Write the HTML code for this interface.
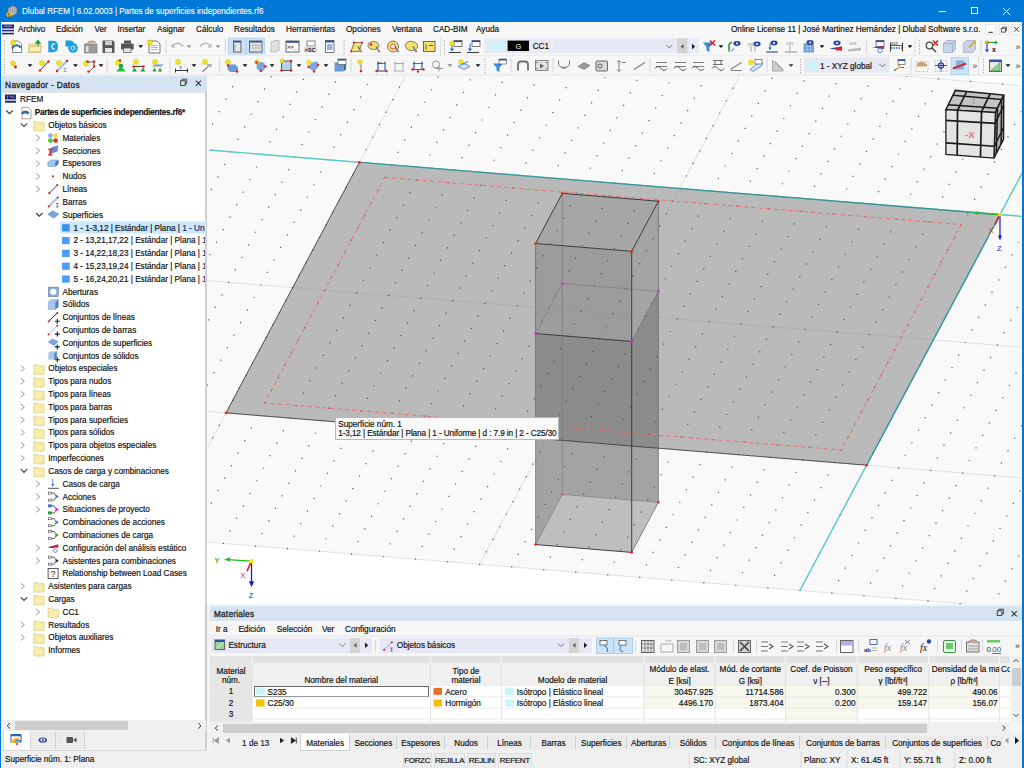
<!DOCTYPE html><html><head><meta charset="utf-8"><style>
*{margin:0;padding:0;box-sizing:border-box}
html,body{width:1024px;height:768px;overflow:hidden;background:#f0f0f0;font-family:"Liberation Sans",sans-serif;font-size:8.2px;color:#1e1e1e}
.a{position:absolute}
.t{position:absolute;white-space:nowrap;line-height:10px}
.tr{color:#111;-webkit-text-stroke:0.18px #111}
</style></head><body>
<div class="a" style="left:0;top:0;width:1024px;height:22px;background:#0078d7"></div>
<div class="t" style="left:21.6px;top:6px;color:#fff;font-size:9.2px;transform:scaleX(0.88);transform-origin:0 0;-webkit-text-stroke:0.1px #fff">Dlubal RFEM | 6.02.0003 | Partes de superficies independientes.rf6</div>
<svg class="a" style="left:4px;top:4px" width="16" height="14" viewBox="4 4 16 14"><path d="M8 8l5 -2.5l4 2v6l-5 2.5l-4 -2z" fill="#b8bcc8" stroke="#555a66" stroke-width="0.7"/><path d="M10 7v7M12.5 6v7.5M15 6.5v7" stroke="#7a8090" stroke-width="0.6"/><circle cx="9" cy="14.5" r="2.6" fill="#f0c010"/><text x="7.6" y="16.5" font-family="Liberation Sans" font-size="4.5" fill="#333">6</text></svg>
<div class="a" style="left:939px;top:10.5px;width:7px;height:1px;background:#fff"></div>
<div class="a" style="left:970.5px;top:7.3px;width:7.2px;height:7px;border:1px solid #fff"></div>
<svg class="a" style="left:1002px;top:6.5px" width="9" height="9" viewBox="0 0 9 9"><path d="M0.8 0.8L8.2 8.2M8.2 0.8L0.8 8.2" stroke="#fff" stroke-width="1"/></svg>
<div class="a" style="left:0;top:0;width:1px;height:768px;background:#0078d7"></div>
<div class="a" style="left:1022px;top:0;width:2px;height:768px;background:#0078d7"></div>
<div class="a" style="left:1px;top:22px;width:1021px;height:15px;background:#f7f7f7"></div>
<div class="t tr" style="left:18px;top:25px">Archivo</div>
<div class="t tr" style="left:56px;top:25px">Edición</div>
<div class="t tr" style="left:94.5px;top:25px">Ver</div>
<div class="t tr" style="left:117.5px;top:25px">Insertar</div>
<div class="t tr" style="left:157px;top:25px">Asignar</div>
<div class="t tr" style="left:196px;top:25px">Cálculo</div>
<div class="t tr" style="left:234px;top:25px">Resultados</div>
<div class="t tr" style="left:286px;top:25px">Herramientas</div>
<div class="t tr" style="left:346px;top:25px">Opciones</div>
<div class="t tr" style="left:392px;top:25px">Ventana</div>
<div class="t tr" style="left:433px;top:25px">CAD-BIM</div>
<div class="t tr" style="left:476px;top:25px">Ayuda</div>
<div class="t tr" style="left:731px;top:25px">Online License 11 | José Martinez Hernández | Dlubal Software s.r.o.</div>
<svg class="a" style="left:1px;top:22px" width="16" height="15" viewBox="1 22 16 15"><rect x="2" y="24.5" width="12" height="4" fill="#1e2a78"/><rect x="2" y="29.8" width="12" height="1.6" fill="#1e2a78"/><rect x="2" y="32.8" width="12" height="1.6" fill="#1e2a78"/><path d="M4 26.2h8" stroke="#d0d8f8" stroke-width="0.7"/></svg>
<div class="a" style="left:985.4px;top:23.6px;width:10.5px;height:11.5px;background:#fff;border:1px solid #e8e8e8"></div>
<div class="a" style="left:998.7px;top:23.6px;width:10.5px;height:11.5px;background:#fff;border:1px solid #e8e8e8"></div>
<div class="a" style="left:1011px;top:23.6px;width:10.5px;height:11.5px;background:#fff;border:1px solid #e8e8e8"></div>
<svg class="a" style="left:984px;top:22px" width="38" height="15" viewBox="984 22 38 15"><path d="M988.3 32.3h4.5" stroke="#333" stroke-width="1"/><rect x="1001.3" y="28.3" width="4" height="3.8" fill="none" stroke="#333" stroke-width="0.8"/><path d="M1002.6 28.3v-1.3h4v3.8h-1.3" fill="none" stroke="#333" stroke-width="0.8"/><path d="M1014 26.8l5 5M1019 26.8l-5 5" stroke="#333" stroke-width="1"/></svg>
<svg class="a" style="left:0;top:37px" width="1024" height="38" viewBox="0 37 1024 38"><rect x="1" y="37" width="1021" height="38" fill="#f7f7f7"/><path d="M1 55.6h1021" stroke="#e8e8e8" stroke-width="0.8"/><path d="M1 74.6h1021" stroke="#e4e4e4" stroke-width="0.8"/><rect x="4" y="40.0" width="1" height="1" fill="#a0a0a0"/><rect x="4" y="42.6" width="1" height="1" fill="#a0a0a0"/><rect x="4" y="45.2" width="1" height="1" fill="#a0a0a0"/><rect x="4" y="47.8" width="1" height="1" fill="#a0a0a0"/><rect x="4" y="50.4" width="1" height="1" fill="#a0a0a0"/><rect x="4" y="53.0" width="1" height="1" fill="#a0a0a0"/><rect x="4" y="59.0" width="1" height="1" fill="#a0a0a0"/><rect x="4" y="61.6" width="1" height="1" fill="#a0a0a0"/><rect x="4" y="64.2" width="1" height="1" fill="#a0a0a0"/><rect x="4" y="66.8" width="1" height="1" fill="#a0a0a0"/><rect x="4" y="69.4" width="1" height="1" fill="#a0a0a0"/><rect x="4" y="72.0" width="1" height="1" fill="#a0a0a0"/><rect x="343.6" y="40.0" width="1" height="1" fill="#a0a0a0"/><rect x="343.6" y="42.6" width="1" height="1" fill="#a0a0a0"/><rect x="343.6" y="45.2" width="1" height="1" fill="#a0a0a0"/><rect x="343.6" y="47.8" width="1" height="1" fill="#a0a0a0"/><rect x="343.6" y="50.4" width="1" height="1" fill="#a0a0a0"/><rect x="343.6" y="53.0" width="1" height="1" fill="#a0a0a0"/><rect x="444" y="40.0" width="1" height="1" fill="#a0a0a0"/><rect x="444" y="42.6" width="1" height="1" fill="#a0a0a0"/><rect x="444" y="45.2" width="1" height="1" fill="#a0a0a0"/><rect x="444" y="47.8" width="1" height="1" fill="#a0a0a0"/><rect x="444" y="50.4" width="1" height="1" fill="#a0a0a0"/><rect x="444" y="53.0" width="1" height="1" fill="#a0a0a0"/><rect x="484.5" y="59.0" width="1" height="1" fill="#a0a0a0"/><rect x="484.5" y="61.6" width="1" height="1" fill="#a0a0a0"/><rect x="484.5" y="64.2" width="1" height="1" fill="#a0a0a0"/><rect x="484.5" y="66.8" width="1" height="1" fill="#a0a0a0"/><rect x="484.5" y="69.4" width="1" height="1" fill="#a0a0a0"/><rect x="484.5" y="72.0" width="1" height="1" fill="#a0a0a0"/><rect x="800" y="59.0" width="1" height="1" fill="#a0a0a0"/><rect x="800" y="61.6" width="1" height="1" fill="#a0a0a0"/><rect x="800" y="64.2" width="1" height="1" fill="#a0a0a0"/><rect x="800" y="66.8" width="1" height="1" fill="#a0a0a0"/><rect x="800" y="69.4" width="1" height="1" fill="#a0a0a0"/><rect x="800" y="72.0" width="1" height="1" fill="#a0a0a0"/><rect x="919" y="40.0" width="1" height="1" fill="#a0a0a0"/><rect x="919" y="42.6" width="1" height="1" fill="#a0a0a0"/><rect x="919" y="45.2" width="1" height="1" fill="#a0a0a0"/><rect x="919" y="47.8" width="1" height="1" fill="#a0a0a0"/><rect x="919" y="50.4" width="1" height="1" fill="#a0a0a0"/><rect x="919" y="53.0" width="1" height="1" fill="#a0a0a0"/><rect x="983" y="59.0" width="1" height="1" fill="#a0a0a0"/><rect x="983" y="61.6" width="1" height="1" fill="#a0a0a0"/><rect x="983" y="64.2" width="1" height="1" fill="#a0a0a0"/><rect x="983" y="66.8" width="1" height="1" fill="#a0a0a0"/><rect x="983" y="69.4" width="1" height="1" fill="#a0a0a0"/><rect x="983" y="72.0" width="1" height="1" fill="#a0a0a0"/><path d="M440.6 37V56" stroke="#e0e0e0" stroke-width="1"/><path d="M915.0 37V56" stroke="#e0e0e0" stroke-width="1"/><path d="M978.5 56V75" stroke="#e0e0e0" stroke-width="1"/><path d="M338.0 56V75" stroke="#f5f5f5" stroke-width="1"/><path d="M12.5 41.0h6l3 3v8.5h-9z" fill="#fff" stroke="#666" stroke-width="0.8"/><path d="M12 48.5q4 -6 9 -1" fill="none" stroke="#3a6ab0" stroke-width="2.2"/><polygon points="13.00,39.50 13.57,41.11 15.12,40.38 14.39,41.93 16.00,42.50 14.39,43.07 15.12,44.62 13.57,43.89 13.00,45.50 12.43,43.89 10.88,44.62 11.61,43.07 10.00,42.50 11.61,41.93 10.88,40.38 12.43,41.11" fill="#f8f000" stroke="#c8b400" stroke-width="0.4"/><path d="M28.8 44.0h4l1 1h7v7.5h-12z" fill="#f2e6a0" stroke="#c8b46a" stroke-width="0.7"/><path d="M28.3 52.0l2 -5.5h11.2l-1.8 5.5z" fill="#f8eeb4" stroke="#c8b46a" stroke-width="0.6"/><path d="M38 45.5v-4M36 43.0l2 -2.5l2 2.5z" stroke="#20a020" fill="#20a020" stroke-width="1.3"/><path d="M48.3 40.7h4.5q5.2 0 5.2 5.8t-5.2 5.8h-4.5z" fill="#1aa0e0"/><path d="M55 44.0q-3 -0.5 -3 2.5t3 2.5" fill="none" stroke="#fff" stroke-width="1.2"/><path d="M65.5 40.5h4.5q4 0 4 4v2h-8.5z" fill="#1aa0e0"/><circle cx="73" cy="48.0" r="4.8" fill="#1aa0e0"/><circle cx="73" cy="48.0" r="2" fill="none" stroke="#fff" stroke-width="0.8"/><rect x="84.5" y="44.0" width="12.5" height="9" fill="#9a9a9a" stroke="#777" stroke-width="0.6"/><rect x="86" y="46.0" width="2.5" height="6" fill="#e0e0e0"/><path d="M86 44.5q4 -6 10 -2" fill="#d8b080" stroke="#6a80c0" stroke-width="0.7"/><path d="M102.5 40.5h10.5l1.5 1.5v11h-12z" fill="#555"/><rect x="105" y="41.0" width="7" height="4.2" fill="#ccc"/><rect x="105" y="48.0" width="7" height="4.5" fill="#e8e8e8"/><rect x="124" y="40.5" width="7" height="3" fill="#555"/><rect x="121" y="43.5" width="12.6" height="6" rx="1" fill="#555"/><rect x="123.5" y="48.0" width="7.6" height="4.5" fill="#e0e0e0" stroke="#555" stroke-width="0.7"/><path d="M138.30 45.30h4.8l-2.4 2.6z" fill="#111"/><path d="M149 41.0h8l3 3v9h-11z" fill="#fff" stroke="#666" stroke-width="0.9"/><path d="M151 45.5h7M151 47.5h7M151 49.5h7" stroke="#888" stroke-width="0.6"/><polygon points="150.00,39.30 150.61,41.02 152.26,40.24 151.48,41.89 153.20,42.50 151.48,43.11 152.26,44.76 150.61,43.98 150.00,45.70 149.39,43.98 147.74,44.76 148.52,43.11 146.80,42.50 148.52,41.89 147.74,40.24 149.39,41.02" fill="#f8f000" stroke="#c8b400" stroke-width="0.4"/><path d="M166.0 39V54" stroke="#d6d6d6" stroke-width="1"/><path d="M173 45.5q5 -5 10 1" fill="none" stroke="#b8b8b8" stroke-width="1.6"/><path d="M171.5 43.5v4h4z" fill="#b8b8b8"/><path d="M186.60 45.30h4.8l-2.4 2.6z" fill="#909090"/><path d="M200 46.5q5 -6 10 -1" fill="none" stroke="#b8b8b8" stroke-width="1.6"/><path d="M211.5 43.5v4h-4z" fill="#b8b8b8"/><path d="M215.60 45.30h4.8l-2.4 2.6z" fill="#909090"/><path d="M225.4 39V54" stroke="#d6d6d6" stroke-width="1"/><rect x="228.4" y="38" width="17.6" height="16" fill="#cce4f7" stroke="#a8d0f0" stroke-width="0.8"/><rect x="246.5" y="38" width="18" height="16" fill="#cce4f7" stroke="#a8d0f0" stroke-width="0.8"/><rect x="233.5" y="41.0" width="7.5" height="11" fill="#e8e8e8" stroke="#444" stroke-width="0.8"/><rect x="233.5" y="41.0" width="7.5" height="1.5" fill="#3050a0"/><path d="M235 44.5v6" stroke="#888" stroke-width="0.8"/><rect x="249.5" y="41.0" width="12.5" height="11" fill="#e8e8e8" stroke="#444" stroke-width="0.8"/><rect x="249.5" y="41.0" width="12.5" height="1.5" fill="#3050a0"/><path d="M250 45.5h12M250 48.0h12M253 42.5v9M256 42.5v9M259 42.5v9" stroke="#999" stroke-width="0.5"/><path d="M271 42.0l4 -1.5h4v10l-4 1.5h-4z" fill="#e0e0e0" stroke="#aaa" stroke-width="0.7"/><rect x="286" y="41.0" width="13" height="11" fill="#fff" stroke="#444" stroke-width="0.8"/><rect x="286" y="41.0" width="13" height="1.8" fill="#3050a0"/><text x="287" y="48.5" font-family="Liberation Mono" font-size="5.5" font-weight="bold" fill="#222">&gt;&gt;_</text><rect x="307" y="41.0" width="8" height="5" fill="#fff" stroke="#555" stroke-width="0.7"/><rect x="304.5" y="46.5" width="12.5" height="6" fill="#d8d8d8"/><text x="304.5" y="51.5" font-family="Liberation Sans" font-size="5.5" font-weight="bold" fill="#222">&gt;SC</text><rect x="325.5" y="40.5" width="8.5" height="12" fill="#fff" stroke="#555" stroke-width="0.8"/><rect x="325.5" y="40.5" width="8.5" height="2" fill="#3050a0"/><rect x="327" y="44.0" width="5.5" height="6" fill="#9ab0d8"/><path d="M351 51.5l3 -9h8l-3 9z" fill="#f4e070" stroke="#333" stroke-width="0.6"/><circle cx="351.00" cy="51.50" r="1.1" fill="#e41b1b"/><circle cx="354.00" cy="42.50" r="1.1" fill="#e41b1b"/><circle cx="362.00" cy="42.50" r="1.1" fill="#e41b1b"/><path d="M358 46.5l4 5l-1.5 0.5z" fill="#fff" stroke="#333" stroke-width="0.6"/><ellipse cx="373.5" cy="45.5" rx="5.5" ry="4" fill="#f4e070" stroke="#333" stroke-width="0.6"/><circle cx="371.00" cy="44.50" r="1.3" fill="#e41b1b"/><path d="M376 46.5l4 5l-1.5 0.5z" fill="#fff" stroke="#333" stroke-width="0.6"/><circle cx="393" cy="46.5" r="5.5" fill="#f4e070" stroke="#333" stroke-width="0.6"/><circle cx="393" cy="46.5" r="2.5" fill="#fff" stroke="#d02020" stroke-width="0.8"/><path d="M395 46.5l4 5l-1.5 0.5z" fill="#fff" stroke="#333" stroke-width="0.6"/><path d="M405.5 44.5q2 -4 7 -3t5 5q0 4 -6 4t-6 -6z" fill="#f4e070" stroke="#333" stroke-width="0.6"/><path d="M413 46.5l4 5l-1.5 0.5z" fill="#fff" stroke="#333" stroke-width="0.6"/><rect x="423.5" y="41.5" width="11.5" height="10" fill="#f4e070" stroke="#333" stroke-width="0.7"/><path d="M426 44.5v5M429 45.5h4" stroke="#333" stroke-width="0.8"/><rect x="454" y="40.5" width="8" height="6" fill="#fff" stroke="#444" stroke-width="0.7"/><rect x="454" y="40.5" width="8" height="1.6" fill="#3050a0"/><path d="M452 43.5v7" stroke="#2a6ac0" stroke-width="1"/><path d="M450 48.5l2 3l2 -3z" fill="#2a6ac0"/><path d="M449 52.5h12" stroke="#444" stroke-width="1.1"/><polygon points="452.00,40.50 452.57,42.11 454.12,41.38 453.39,42.93 455.00,43.50 453.39,44.07 454.12,45.62 452.57,44.89 452.00,46.50 451.43,44.89 449.88,45.62 450.61,44.07 449.00,43.50 450.61,42.93 449.88,41.38 451.43,42.11" fill="#f8f000" stroke="#c8b400" stroke-width="0.4"/><rect x="472" y="40.5" width="8" height="6" fill="#fff" stroke="#444" stroke-width="0.7"/><rect x="472" y="40.5" width="8" height="1.6" fill="#3050a0"/><path d="M470 43.5v7" stroke="#2a6ac0" stroke-width="1"/><path d="M468 48.5l2 3l2 -3z" fill="#2a6ac0"/><path d="M467 52.5h12" stroke="#444" stroke-width="1.1"/><rect x="484.5" y="38.3" width="214.2" height="15" fill="#e6e8f4"/><rect x="489" y="42" width="7.5" height="7.5" fill="#c8f4fa"/><rect x="498" y="42" width="7.5" height="7.5" fill="#c8f4fa"/><rect x="507.6" y="40.6" width="21.4" height="10.4" fill="#000"/><text x="515.5" y="48.8" font-family="Liberation Sans" font-size="7.5" fill="#fff">G</text><path d="M552.0 40V52" stroke="#f4f4fa" stroke-width="1"/><path d="M666.4 44.9l3 3l3 -3" fill="none" stroke="#555" stroke-width="0.8"/><rect x="677" y="38.3" width="10.4" height="15" fill="#d4d4d4"/><path d="M683.5 43.9v5.2l-2.8 -2.6z" fill="#555"/><path d="M692 43.7v5.6l3 -2.8z" fill="#111"/><path d="M703 42.5h10l-3.5 4.5v5l-3 -1.5v-3.5z" fill="#3a8ae0"/><path d="M710 40.5l5 5M715 40.5l-5 5" stroke="#e02020" stroke-width="1.6"/><path d="M718.60 45.30h4.8l-2.4 2.6z" fill="#111"/><path d="M729 51.5v-6q0 -3 3 -3" fill="none" stroke="#20a040" stroke-width="1.6"/><path d="M731 51.5l3 -3" stroke="#2a4aa0" stroke-width="1"/><ellipse cx="737" cy="43.5" rx="3.6" ry="2.4" fill="#2a4aa0"/><circle cx="737" cy="43.5" r="1" fill="#fff"/><text x="748" y="45.5" font-family="Liberation Sans" font-size="5" fill="#888">xxx</text><path d="M751 46.5v5M755 46.5v5" stroke="#888" stroke-width="0.8"/><ellipse cx="757" cy="44.0" rx="3.6" ry="2.4" fill="#2a4aa0"/><circle cx="757" cy="44.0" r="1" fill="#fff"/><path d="M770 43.5v6" stroke="#2a6ac0" stroke-width="1"/><path d="M768.5 47.5l1.5 2.5l1.5 -2.5z" fill="#2a6ac0"/><path d="M766 52.0h12" stroke="#555" stroke-width="1.2"/><ellipse cx="774" cy="43.0" rx="3.6" ry="2.4" fill="#2a4aa0"/><circle cx="774" cy="43.0" r="1" fill="#fff"/><text x="786" y="45.0" font-family="Liberation Sans" font-size="5" fill="#999">xxx</text><path d="M790 45.5v6" stroke="#999" stroke-width="0.9"/><path d="M785 52.0h12" stroke="#999" stroke-width="1.2"/><rect x="803.5" y="43.5" width="10.5" height="9" fill="#6a9ad8"/><path d="M804 46.5h10M804 49.5h10M807 43.5v9M810.5 43.5v9" stroke="#b8d0f0" stroke-width="0.6"/><ellipse cx="810" cy="42.5" rx="3.6" ry="2.4" fill="#2a4aa0"/><circle cx="810" cy="42.5" r="1" fill="#fff"/><path d="M819.60 45.30h4.8l-2.4 2.6z" fill="#111"/><path d="M829 48.5l13 -2v4z" fill="#2a4ad0"/><path d="M836 47.5l6 -1v4l-6 0z" fill="#e02020"/><ellipse cx="837" cy="43.0" rx="3.6" ry="2.4" fill="#2a4aa0"/><circle cx="837" cy="43.0" r="1" fill="#fff"/><text x="849" y="45.0" font-family="Liberation Sans" font-size="5" fill="#999">xxx</text><path d="M848 49.5l13 -2v3l-13 1z" fill="#bbb"/><path d="M866.4 39V54" stroke="#d6d6d6" stroke-width="1"/><rect x="876" y="40.5" width="8" height="6" fill="#fff" stroke="#444" stroke-width="0.7"/><rect x="876" y="40.5" width="8" height="1.6" fill="#3050a0"/><path d="M872 47.5l12 -1.5v3z" fill="#2a4ad0"/><path d="M878 47.0l6 -1v3z" fill="#e02020"/><circle cx="880" cy="50.5" r="2.2" fill="none" stroke="#5a8ae0" stroke-width="1"/><path d="M890.5 42.5v9M902.5 42.5v9" stroke="#333" stroke-width="1"/><path d="M891 45.5h11" stroke="#333" stroke-width="0.8"/><path d="M891 48.0h11" stroke="#2a6ac0" stroke-width="1.6" stroke-dasharray="1.5 1"/><text x="891" y="44.5" font-family="Liberation Sans" font-size="4.5" fill="#333">xxx</text><path d="M907.60 45.30h4.8l-2.4 2.6z" fill="#111"/><circle cx="929.5" cy="45.5" r="3.3" fill="none" stroke="#444" stroke-width="1.2"/><path d="M932 48.0l4 4" stroke="#444" stroke-width="1.5"/><path d="M933 40.5l5 5M938 40.5l-5 5" stroke="#e02020" stroke-width="1.6"/><path d="M943.5 43.5l3 -3h9v9l-3 3h-9z" fill="#c8d4e8" stroke="#8a9ac0" stroke-width="0.6"/><path d="M943.5 43.5h9v9M952.5 43.5l3 -3" fill="none" stroke="#8a9ac0" stroke-width="0.6"/><path d="M963.5 43.5l3 -3h9v9l-3 3h-9z" fill="#c8d4e8" stroke="#8a9ac0" stroke-width="0.6"/><path d="M969 47.5l6 -6" stroke="#e0a020" stroke-width="1.6"/><path d="M981.0 39V54" stroke="#d6d6d6" stroke-width="1"/><path d="M987 42.5v9" stroke="#2a4ad0" stroke-width="1.2"/><path d="M985 49.5l2 3l2 -3z" fill="#2a4ad0"/><path d="M987 42.5h9" stroke="#20a040" stroke-width="1.2"/><path d="M995 40.5l3 2l-3 2z" fill="#20a040"/><circle cx="987" cy="42.5" r="1.6" fill="#f0c020" stroke="#c02020" stroke-width="0.5"/><text x="992" y="52.0" font-family="Liberation Sans" font-size="7" font-weight="bold" fill="#111">x</text><text x="1015.5" y="49.5" font-family="Liberation Sans" font-size="8.5" fill="#333">»</text><polygon points="13.00,60.30 13.61,62.02 15.26,61.24 14.48,62.89 16.20,63.50 14.48,64.11 15.26,65.76 13.61,64.98 13.00,66.70 12.39,64.98 10.74,65.76 11.52,64.11 9.80,63.50 11.52,62.89 10.74,61.24 12.39,62.02" fill="#f8f000" stroke="#c8b400" stroke-width="0.4"/><circle cx="15.50" cy="67.00" r="1.4" fill="#e41b1b"/><path d="M27.60 64.30h4.8l-2.4 2.6z" fill="#111"/><polygon points="42.00,59.80 42.61,61.52 44.26,60.74 43.48,62.39 45.20,63.00 43.48,63.61 44.26,65.26 42.61,64.48 42.00,66.20 41.39,64.48 39.74,65.26 40.52,63.61 38.80,63.00 40.52,62.39 39.74,60.74 41.39,61.52" fill="#f8f000" stroke="#c8b400" stroke-width="0.4"/><path d="M40 70.5l8.5 -9" stroke="#222" stroke-width="0.9"/><circle cx="40.00" cy="70.50" r="1.2" fill="#e41b1b"/><circle cx="48.50" cy="61.50" r="1.2" fill="#e41b1b"/><polygon points="59.00,59.80 59.61,61.52 61.26,60.74 60.48,62.39 62.20,63.00 60.48,63.61 61.26,65.26 59.61,64.48 59.00,66.20 58.39,64.48 56.74,65.26 57.52,63.61 55.80,63.00 57.52,62.39 56.74,60.74 58.39,61.52" fill="#f8f000" stroke="#c8b400" stroke-width="0.4"/><path d="M57 71.0l10 -10" stroke="#a8c4e8" stroke-width="2.2"/><circle cx="57.00" cy="71.00" r="1.2" fill="#e41b1b"/><circle cx="67.00" cy="61.00" r="1.2" fill="#e41b1b"/><path d="M63.5 68.5h3M65 68.5v3M63.5 71.5h3" stroke="#7a8ab0" stroke-width="0.7"/><path d="M73.10 64.30h4.8l-2.4 2.6z" fill="#111"/><polygon points="86.00,60.30 86.61,62.02 88.26,61.24 87.48,62.89 89.20,63.50 87.48,64.11 88.26,65.76 86.61,64.98 86.00,66.70 85.39,64.98 83.74,65.76 84.52,64.11 82.80,63.50 84.52,62.89 83.74,61.24 85.39,62.02" fill="#f8f000" stroke="#c8b400" stroke-width="0.4"/><path d="M87 62.0h7v5l-5 5" fill="none" stroke="#555" stroke-width="0.9"/><circle cx="87.50" cy="61.50" r="1.2" fill="#e41b1b"/><circle cx="94.00" cy="61.50" r="1.2" fill="#e41b1b"/><circle cx="94.00" cy="66.50" r="1.2" fill="#e41b1b"/><circle cx="88.50" cy="71.50" r="1.2" fill="#e41b1b"/><path d="M98.60 64.30h4.8l-2.4 2.6z" fill="#111"/><path d="M107.0 58V73" stroke="#d6d6d6" stroke-width="1"/><polygon points="118.00,59.30 118.61,61.02 120.26,60.24 119.48,61.89 121.20,62.50 119.48,63.11 120.26,64.76 118.61,63.98 118.00,65.70 117.39,63.98 115.74,64.76 116.52,63.11 114.80,62.50 116.52,61.89 115.74,60.24 117.39,61.02" fill="#f8f000" stroke="#c8b400" stroke-width="0.4"/><circle cx="120.00" cy="60.50" r="1.2" fill="#e41b1b"/><circle cx="121" cy="66.0" r="2.2" fill="#20a040"/><path d="M116 71.5l5 -5l5 5z" fill="#20c040"/><polygon points="136.00,58.80 136.61,60.52 138.26,59.74 137.48,61.39 139.20,62.00 137.48,62.61 138.26,64.26 136.61,63.48 136.00,65.20 135.39,63.48 133.74,64.26 134.52,62.61 132.80,62.00 134.52,61.39 133.74,59.74 135.39,60.52" fill="#f8f000" stroke="#c8b400" stroke-width="0.4"/><path d="M133.5 66.5h10" stroke="#222" stroke-width="0.9"/><circle cx="133.50" cy="66.50" r="1.2" fill="#e41b1b"/><circle cx="143.50" cy="66.50" r="1.2" fill="#e41b1b"/><path d="M132 71.5l2.5 -4l2.5 4zM140.5 71.5l2.5 -4l2.5 4z" fill="#20a040"/><polygon points="155.00,58.80 155.61,60.52 157.26,59.74 156.48,61.39 158.20,62.00 156.48,62.61 157.26,64.26 155.61,63.48 155.00,65.20 154.39,63.48 152.74,64.26 153.52,62.61 151.80,62.00 153.52,61.39 152.74,59.74 154.39,60.52" fill="#f8f000" stroke="#c8b400" stroke-width="0.4"/><path d="M152 66.5l3 -2h9l-3 2z" fill="#7a9ad0"/><path d="M152.5 71.5l2 -4l2 4zM158 71.5l2 -4l2 4z" fill="#20a040"/><path d="M170.0 58V73" stroke="#d6d6d6" stroke-width="1"/><polygon points="178.00,58.80 178.61,60.52 180.26,59.74 179.48,61.39 181.20,62.00 179.48,62.61 180.26,64.26 178.61,63.48 178.00,65.20 177.39,63.48 175.74,64.26 176.52,62.61 174.80,62.00 176.52,61.39 175.74,59.74 177.39,60.52" fill="#f8f000" stroke="#c8b400" stroke-width="0.4"/><path d="M175.5 68.5v4M187.5 68.5v4M175.5 70.5h12" stroke="#222" stroke-width="0.9"/><text x="179.5" y="68.5" font-family="Liberation Sans" font-size="4.5" fill="#222">x</text><path d="M191.60 64.30h4.8l-2.4 2.6z" fill="#111"/><polygon points="205.00,58.80 205.61,60.52 207.26,59.74 206.48,61.39 208.20,62.00 206.48,62.61 207.26,64.26 205.61,63.48 205.00,65.20 204.39,63.48 202.74,64.26 203.52,62.61 201.80,62.00 203.52,61.39 202.74,59.74 204.39,60.52" fill="#f8f000" stroke="#c8b400" stroke-width="0.4"/><text x="207" y="66.5" font-family="Liberation Sans" font-size="4.5" fill="#222">xx</text><path d="M202.5 71.5l5 -4M206.5 65.5" stroke="#222" stroke-width="0.9"/><path d="M219.6 58V73" stroke="#d6d6d6" stroke-width="1"/><polygon points="228.00,58.80 228.61,60.52 230.26,59.74 229.48,61.39 231.20,62.00 229.48,62.61 230.26,64.26 228.61,63.48 228.00,65.20 227.39,63.48 225.74,64.26 226.52,62.61 224.80,62.00 226.52,61.39 225.74,59.74 227.39,60.52" fill="#f8f000" stroke="#c8b400" stroke-width="0.4"/><path d="M227.5 64.5h8l2.5 3v4.5h-8l-2.5 -3z" fill="#6a9ad8"/><circle cx="228.00" cy="65.50" r="1.2" fill="#e41b1b"/><circle cx="237.00" cy="71.50" r="1.3" fill="#e41b1b"/><path d="M242.60 64.30h4.8l-2.4 2.6z" fill="#111"/><polygon points="257.00,59.20 257.54,60.71 258.98,60.02 258.29,61.46 259.80,62.00 258.29,62.54 258.98,63.98 257.54,63.29 257.00,64.80 256.46,63.29 255.02,63.98 255.71,62.54 254.20,62.00 255.71,61.46 255.02,60.02 256.46,60.71" fill="#f8f000" stroke="#c8b400" stroke-width="0.4"/><circle cx="261" cy="66.5" r="4.5" fill="#7aa6dc"/><circle cx="256.50" cy="62.50" r="1.2" fill="#e41b1b"/><circle cx="265.50" cy="66.50" r="1.2" fill="#e41b1b"/><circle cx="261.00" cy="71.00" r="1.2" fill="#e41b1b"/><path d="M269.60 64.30h4.8l-2.4 2.6z" fill="#111"/><rect x="281.5" y="61.0" width="9.5" height="9.5" fill="#b8d0f0" stroke="#555" stroke-width="1"/><polygon points="282.00,58.40 282.50,59.80 283.84,59.16 283.20,60.50 284.60,61.00 283.20,61.50 283.84,62.84 282.50,62.20 282.00,63.60 281.50,62.20 280.16,62.84 280.80,61.50 279.40,61.00 280.80,60.50 280.16,59.16 281.50,59.80" fill="#f8f000" stroke="#c8b400" stroke-width="0.4"/><circle cx="281.50" cy="70.50" r="1.3" fill="#e41b1b"/><circle cx="291.00" cy="61.00" r="1.3" fill="#e41b1b"/><circle cx="291.00" cy="70.50" r="1.3" fill="#e41b1b"/><path d="M296.60 64.30h4.8l-2.4 2.6z" fill="#111"/><polygon points="309.00,59.70 309.54,61.21 310.98,60.52 310.29,61.96 311.80,62.50 310.29,63.04 310.98,64.48 309.54,63.79 309.00,65.30 308.46,63.79 307.02,64.48 307.71,63.04 306.20,62.50 307.71,61.96 307.02,60.52 308.46,61.21" fill="#f8f000" stroke="#c8b400" stroke-width="0.4"/><path d="M308 67.5l4 -5l6 -1v6l-4 4z" fill="#7aa6dc"/><circle cx="308.50" cy="67.00" r="1.2" fill="#e41b1b"/><circle cx="314.00" cy="71.50" r="1.2" fill="#e41b1b"/><circle cx="318.00" cy="65.00" r="1.2" fill="#e41b1b"/><path d="M323.60 64.30h4.8l-2.4 2.6z" fill="#111"/><path d="M334.5 62.5h9v9h-9z" fill="#6a9ad8"/><path d="M343.5 62.5l2.5 -2v9l-2.5 2z" fill="#3a6ab0"/><rect x="338" y="59.0" width="8" height="5.5" fill="#fff" stroke="#444" stroke-width="0.6"/><rect x="338" y="59.0" width="8" height="1.5" fill="#3050a0"/><path d="M351.0 58V73" stroke="#d6d6d6" stroke-width="1"/><polygon points="360.00,59.20 360.54,60.71 361.98,60.02 361.29,61.46 362.80,62.00 361.29,62.54 361.98,63.98 360.54,63.29 360.00,64.80 359.46,63.29 358.02,63.98 358.71,62.54 357.20,62.00 358.71,61.46 358.02,60.02 359.46,60.71" fill="#f8f000" stroke="#c8b400" stroke-width="0.4"/><path d="M361 64.5v5" stroke="#555" stroke-width="0.8"/><circle cx="361.00" cy="71.00" r="1.3" fill="#e41b1b"/><path d="M376.5 71.0h10" stroke="#222" stroke-width="0.9"/><path d="M378 61.5v9M385 61.5v9" stroke="#2a6ac0" stroke-width="1.2"/><path d="M377 63.5h9" stroke="#555" stroke-width="0.8"/><circle cx="376.50" cy="71.00" r="1.2" fill="#e41b1b"/><circle cx="386.50" cy="71.00" r="1.2" fill="#e41b1b"/><text x="378" y="63.5" font-family="Liberation Sans" font-size="4" fill="#222">xx</text><path d="M393.5 71.0h11M395 61.5v9M403 61.5v9M394 63.5h10" stroke="#aaa" stroke-width="1"/><path d="M412.5 69.5h11" stroke="#444" stroke-width="0.9"/><path d="M414 61.5v8M422 61.5v8" stroke="#2a6ac0" stroke-width="1.2"/><path d="M413 63.5h10" stroke="#444" stroke-width="0.8"/><circle cx="412.50" cy="69.50" r="1.2" fill="#e41b1b"/><circle cx="423.50" cy="69.50" r="1.2" fill="#e41b1b"/><circle cx="418.00" cy="71.50" r="1.2" fill="#e41b1b"/><circle cx="436" cy="64.5" r="3.5" fill="none" stroke="#999" stroke-width="1"/><path d="M435 68.5h8M439 65.5v6" stroke="#999" stroke-width="1"/><path d="M447.60 64.30h4.8l-2.4 2.6z" fill="#888"/><polygon points="461.00,59.00 461.57,60.61 463.12,59.88 462.39,61.43 464.00,62.00 462.39,62.57 463.12,64.12 461.57,63.39 461.00,65.00 460.43,63.39 458.88,64.12 459.61,62.57 458.00,62.00 459.61,61.43 458.88,59.88 460.43,60.61" fill="#f8f000" stroke="#c8b400" stroke-width="0.4"/><path d="M458 66.5l6 -3l6 3l-6 3z" fill="#cfe4fa" stroke="#3a7ad0" stroke-width="0.8"/><path d="M462 64.5l6 -3" stroke="#2a6ac0" stroke-width="1"/><path d="M475.60 64.30h4.8l-2.4 2.6z" fill="#111"/><path d="M493 63.5h10l-3.5 4v4.5l-3 -1.5v-3z" fill="#3a8ae0"/><rect x="499" y="59.0" width="7.5" height="5" fill="#fff" stroke="#444" stroke-width="0.6"/><rect x="499" y="59.0" width="7.5" height="1.5" fill="#3050a0"/><path d="M511.0 58V73" stroke="#d6d6d6" stroke-width="1"/><path d="M518 70.5v-6q0 -3 3 -3h4q3 0 3 3v6" fill="none" stroke="#6f6f6f" stroke-width="1.8"/><rect x="535.5" y="60.5" width="12.5" height="10" fill="#e0e0e0" stroke="#6f6f6f" stroke-width="0.8"/><path d="M540 63.5v5l4 -2.5z" fill="#666"/><path d="M536 62.5h2M536 68.5h2M545.5 62.5h2M545.5 68.5h2" stroke="#6f6f6f" stroke-width="0.8"/><path d="M553.0 58V73" stroke="#d6d6d6" stroke-width="1"/><path d="M558.5 60.5v4q5 8 11 0v-4" fill="none" stroke="#6f6f6f" stroke-width="1"/><path d="M560 66.5q4 5 8 0" fill="#9a9a9a"/><path d="M578 66.5l6 -4l6 3l-6 4z" fill="#9a9a9a" stroke="#6f6f6f" stroke-width="0.6"/><rect x="596" y="61.0" width="11.5" height="10" rx="1" fill="#d8d8d8" stroke="#666" stroke-width="1"/><circle cx="600" cy="66.0" r="2" fill="none" stroke="#555" stroke-width="0.9"/><path d="M619 60.5v11M617 62.5l2 -2l2 2M617 69.5l2 2l2 -2M622 62.5h4" stroke="#6f6f6f" stroke-width="0.9" fill="none"/><path d="M634 69.5l11 -7" stroke="#808080" stroke-width="1.4"/><path d="M650.0 58V73" stroke="#d6d6d6" stroke-width="1"/><path d="M656 62.5h11M656 66.5h11" stroke="#6f6f6f" stroke-width="0.9"/><path d="M655 68.5q3 -4 6 0t6 0" fill="none" stroke="#555" stroke-width="1"/><path d="M675 62.5h11M675 66.5h11" stroke="#6f6f6f" stroke-width="0.9"/><path d="M674 68.5q3 -4 6 0t6 0" fill="none" stroke="#555" stroke-width="1"/><path d="M693 62.5h11M693 66.5h11" stroke="#6f6f6f" stroke-width="0.9"/><path d="M692 68.5q3 -4 6 0t6 0" fill="none" stroke="#555" stroke-width="1"/><path d="M713 60.5h10M713 64.5h10M715 60.5v4M721 60.5v4" stroke="#6f6f6f" stroke-width="1"/><path d="M712 68.5q3 -4 6 0t6 0" fill="none" stroke="#555" stroke-width="1"/><path d="M730.5 69.5l11 -7M731 70.5h11" stroke="#808080" stroke-width="1.2"/><polygon points="751.00,59.50 751.57,61.11 753.12,60.38 752.39,61.93 754.00,62.50 752.39,63.07 753.12,64.62 751.57,63.89 751.00,65.50 750.43,63.89 748.88,64.62 749.61,63.07 748.00,62.50 749.61,61.93 748.88,60.38 750.43,61.11" fill="#f8f000" stroke="#c8b400" stroke-width="0.4"/><path d="M750 69.5l9 -7h3v3l-9 6z" fill="#cfe4fa" stroke="#3a7ad0" stroke-width="0.8"/><rect x="755" y="59.5" width="7" height="4.5" fill="#fff" stroke="#444" stroke-width="0.6"/><path d="M767.0 58V73" stroke="#d6d6d6" stroke-width="1"/><path d="M772.5 71.0v-11l11 11z" fill="#ccc" stroke="#999" stroke-width="0.8"/><path d="M775 61.5l8 8" stroke="#888" stroke-width="1"/><path d="M788.60 64.30h4.8l-2.4 2.6z" fill="#333"/><rect x="804" y="57.5" width="85.6" height="15" fill="#e6e8f4"/><rect x="808" y="61" width="9.5" height="8" fill="#c8f4fa"/><path d="M879.4 63.9l3 3l3 -3" fill="none" stroke="#555" stroke-width="0.8"/><rect x="898" y="59.5" width="7" height="5" fill="#fff" stroke="#444" stroke-width="0.6"/><rect x="898" y="59.5" width="7" height="1.5" fill="#3050a0"/><path d="M899 67.5l-5 3M899 67.5h5M899 67.5v-3" stroke="#e02020" stroke-width="0.9"/><path d="M894 70.5l2 -1" stroke="#20a040" stroke-width="1.2"/><circle cx="899" cy="67.5" r="1.2" fill="#f0e020"/><path d="M911.0 58V73" stroke="#d6d6d6" stroke-width="1"/><rect x="916" y="61.5" width="12" height="10" fill="none" stroke="#999" stroke-width="0.6" stroke-dasharray="1 1"/><path d="M917 63.5q5 -4 10 1v2h-10z" fill="#d0a070"/><rect x="935" y="60.5" width="12" height="11" fill="none" stroke="#999" stroke-width="0.6" stroke-dasharray="1 1"/><circle cx="941" cy="65.5" r="2.6" fill="none" stroke="#2a3a9a" stroke-width="1.2"/><path d="M935 65.5h12M941 59.5v12" stroke="#2a3a9a" stroke-width="0.9"/><rect x="951" y="57.5" width="17.6" height="17" fill="#cce4f7" stroke="#a8d0f0" stroke-width="0.8"/><path d="M953 68.5l13 -5" stroke="#e02020" stroke-width="2"/><path d="M956 60.5h8v9h-8z" fill="#7aa0d8" opacity="0.8"/><path d="M953 68.5l13 -5" stroke="#e02020" stroke-width="1.5"/><text x="972.5" y="68.5" font-family="Liberation Sans" font-size="8.5" fill="#333">»</text><rect x="989.5" y="60.0" width="12" height="11.5" fill="#e8e8e8" stroke="#555" stroke-width="0.9"/><rect x="989.5" y="60.0" width="12" height="2" fill="#3050a0"/><path d="M991 70.5l9 -8v8z" fill="#8ed08e" stroke="#3a9a3a" stroke-width="0.6"/><path d="M1005.60 64.30h4.8l-2.4 2.6z" fill="#111"/><text x="1015.5" y="68.5" font-family="Liberation Sans" font-size="8.5" fill="#333">»</text></svg><div class="t tr" style="left:532.7px;top:41.9px">CC1</div><div class="t tr" style="left:820px;top:62.3px">1 - XYZ global</div>
<div class="a" style="left:1px;top:75.8px;width:206px;height:15.2px;background:#d6e4f2"></div>
<div class="t tr" style="left:5.1px;top:79.6px;font-size:8.3px;letter-spacing:0.3px;color:#222;-webkit-text-stroke:0.3px #222">Navegador - Datos</div>
<svg class="a" style="left:175px;top:76px" width="32" height="15" viewBox="175 76 32 15"><rect x="180.6" y="80.8" width="4.6" height="4.6" fill="none" stroke="#333" stroke-width="0.9"/><path d="M182.1 80.8v-1.6h4.6v4.6h-1.5" fill="none" stroke="#333" stroke-width="0.9"/><path d="M195.8 80.6l5.2 5.2M201 80.6l-5.2 5.2" stroke="#333" stroke-width="1.1"/></svg>
<div class="a" style="left:1px;top:91px;width:206px;height:659px;background:#f0f0f0"></div>
<div class="a" style="left:2px;top:92.6px;width:203px;height:627.6px;background:#fff"></div>
<div class="a" style="left:1px;top:90.8px;width:206px;height:1.8px;background:#e3e2e8"></div>
<div class="a" style="left:205px;top:91px;width:2px;height:659px;background:#cfcfd6"></div>
<svg class="a" style="left:0;top:0" width="207" height="768" viewBox="0 0 207 768"><rect x="59.9" y="221.30" width="146" height="12.3" fill="#cce8ff"/><rect x="5" y="94.50" width="11" height="5" fill="#1e2470"/><path d="M7.5 95.50v3M9.5 96.00l5 1.5" stroke="#c8d0f0" stroke-width="0.6"/><rect x="5" y="100.70" width="11" height="2" fill="#1e2470"/><path d="M6.3 110.51L9.5 113.71L12.7 110.51" fill="none" stroke="#3a3a3a" stroke-width="1.1"/><path d="M22.0 107.31h6l3,3v8.5h-9z" fill="#fff" stroke="#8a8a8a" stroke-width="0.8"/><path d="M21 112.81q4.5 -4.5 8.5 -0.5l-1.5 2.5q-3 -2.5 -5.5 0z" fill="#3d6aa0"/><path d="M20.8 123.32L24.0 126.52L27.2 123.32" fill="none" stroke="#3a3a3a" stroke-width="1.1"/><path d="M33.9 121.52h3.6l1,1h5.6v8.3h-10.2z" fill="#f6eeac" stroke="#dccf84" stroke-width="0.8"/><path d="M36.1 135.03L39.7 137.93L36.1 140.83" fill="none" stroke="#8a8a8a" stroke-width="0.9"/><circle cx="50.4" cy="135.53" r="2.4" fill="#9aa8e6"/><circle cx="55.599999999999994" cy="135.53" r="2.4" fill="#f0e040"/><circle cx="50.4" cy="140.53" r="2.4" fill="#3ec83e"/><circle cx="55.599999999999994" cy="140.53" r="2.4" fill="#e83030"/><path d="M36.1 147.84L39.7 150.74L36.1 153.64" fill="none" stroke="#8a8a8a" stroke-width="0.9"/><path d="M50.8 147.74l7,-2.5v6l-7,2.5z" fill="#5a8ad8"/><path d="M48.3 149.24h4M50.3 149.24v5.5M48.3 154.74h4" stroke="#e02828" stroke-width="1.6"/><path d="M36.1 160.65L39.7 163.55L36.1 166.45" fill="none" stroke="#8a8a8a" stroke-width="0.9"/><path d="M47.8 162.05l3,-2h7.5v4l-3,2.5h-7.5z" fill="#9cc4f0" stroke="#6c98d0" stroke-width="0.5"/><path d="M55.3 166.55l3,-2.5v-4l-3,2z" fill="#4a70b0"/><path d="M36.1 173.46L39.7 176.36L36.1 179.26" fill="none" stroke="#8a8a8a" stroke-width="0.9"/><circle cx="53.0" cy="176.36" r="1.1" fill="#e02020"/><path d="M36.1 186.27L39.7 189.17L36.1 192.07" fill="none" stroke="#8a8a8a" stroke-width="0.9"/><path d="M49.3 193.17L57.3 185.17" stroke="#222" stroke-width="0.9"/><circle cx="49.3" cy="193.17" r="1.1" fill="#e02020"/><circle cx="57.3" cy="185.17" r="1.1" fill="#e02020"/><path d="M48.8 206.48L57.8 197.48" stroke="#a8c4e8" stroke-width="2.2"/><circle cx="48.8" cy="206.48" r="1.1" fill="#e02020"/><circle cx="57.8" cy="197.48" r="1.1" fill="#e02020"/><path d="M55.8 203.48h3M57.3 203.48v3.5M55.8 206.98h3" stroke="#555" stroke-width="0.7"/><path d="M36.1 212.99L39.3 216.19L42.5 212.99" fill="none" stroke="#3a3a3a" stroke-width="1.1"/><path d="M47.8 214.29L52.3 210.79L58.8 213.99L53.8 218.29z" fill="#7aa6dc" stroke="#5a86c0" stroke-width="0.5"/><rect x="62.1" y="224.20" width="7.6" height="7.2" fill="#3b8ef0"/><rect x="62.1" y="237.01" width="7.6" height="7.2" fill="#4b9cf8"/><rect x="62.1" y="249.82" width="7.6" height="7.2" fill="#4b9cf8"/><rect x="62.1" y="262.63" width="7.6" height="7.2" fill="#4b9cf8"/><rect x="62.1" y="275.44" width="7.6" height="7.2" fill="#4b9cf8"/><rect x="48.3" y="287.15" width="10" height="9.5" fill="#8eaed8" stroke="#5a7ab0" stroke-width="0.6"/><circle cx="53.3" cy="291.85" r="3" fill="#fff"/><path d="M48.3 301.96l3,-2.5h7v7.5l-3,2.5h-7z" fill="#a8c8f0" stroke="#7a9cd0" stroke-width="0.5"/><path d="M55.3 309.46l3,-2.5v-7.5l-3,2.5z" fill="#5a80c0"/><path d="M48.3 321.77L57.3 312.77" stroke="#222" stroke-width="1"/><circle cx="48.599999999999994" cy="321.57" r="1" fill="#e02020"/><circle cx="57.3" cy="312.97" r="1" fill="#e02020"/><path d="M57.3 318.77v5M54.8 321.27h5" stroke="#222" stroke-width="1.1"/><path d="M48.3 334.58L57.3 325.58" stroke="#a8c4e8" stroke-width="1"/><circle cx="48.599999999999994" cy="334.38" r="1" fill="#e02020"/><circle cx="57.3" cy="325.78" r="1" fill="#e02020"/><path d="M57.3 331.58v5M54.8 334.08h5" stroke="#222" stroke-width="1.1"/><path d="M47.8 341.89L52.3 338.39L58.8 341.59L53.8 345.89z" fill="#7aa6dc"/><path d="M57.3 344.39v5M54.8 346.89h5" stroke="#222" stroke-width="1.1"/><path d="M48.3 353.20l2.5,-2h6v6.5l-2.5,2h-6z" fill="#a8c8f0"/><path d="M54.3 359.70l2.5,-2v-6.5l-2.5,2z" fill="#5a80c0"/><path d="M57.3 357.20v5M54.8 359.70h5" stroke="#222" stroke-width="1.1"/><path d="M20.8 365.61L24.4 368.51L20.8 371.41" fill="none" stroke="#8a8a8a" stroke-width="0.9"/><path d="M33.9 364.91h3.6l1,1h5.6v8.3h-10.2z" fill="#f6eeac" stroke="#dccf84" stroke-width="0.8"/><path d="M20.8 378.42L24.4 381.32L20.8 384.22" fill="none" stroke="#8a8a8a" stroke-width="0.9"/><path d="M33.9 377.72h3.6l1,1h5.6v8.3h-10.2z" fill="#f6eeac" stroke="#dccf84" stroke-width="0.8"/><path d="M20.8 391.23L24.4 394.13L20.8 397.03" fill="none" stroke="#8a8a8a" stroke-width="0.9"/><path d="M33.9 390.53h3.6l1,1h5.6v8.3h-10.2z" fill="#f6eeac" stroke="#dccf84" stroke-width="0.8"/><path d="M20.8 404.04L24.4 406.94L20.8 409.84" fill="none" stroke="#8a8a8a" stroke-width="0.9"/><path d="M33.9 403.34h3.6l1,1h5.6v8.3h-10.2z" fill="#f6eeac" stroke="#dccf84" stroke-width="0.8"/><path d="M20.8 416.85L24.4 419.75L20.8 422.65" fill="none" stroke="#8a8a8a" stroke-width="0.9"/><path d="M33.9 416.15h3.6l1,1h5.6v8.3h-10.2z" fill="#f6eeac" stroke="#dccf84" stroke-width="0.8"/><path d="M20.8 429.66L24.4 432.56L20.8 435.46" fill="none" stroke="#8a8a8a" stroke-width="0.9"/><path d="M33.9 428.96h3.6l1,1h5.6v8.3h-10.2z" fill="#f6eeac" stroke="#dccf84" stroke-width="0.8"/><path d="M20.8 442.47L24.4 445.37L20.8 448.27" fill="none" stroke="#8a8a8a" stroke-width="0.9"/><path d="M33.9 441.77h3.6l1,1h5.6v8.3h-10.2z" fill="#f6eeac" stroke="#dccf84" stroke-width="0.8"/><path d="M20.8 455.28L24.4 458.18L20.8 461.08" fill="none" stroke="#8a8a8a" stroke-width="0.9"/><path d="M33.9 454.58h3.6l1,1h5.6v8.3h-10.2z" fill="#f6eeac" stroke="#dccf84" stroke-width="0.8"/><path d="M20.8 469.19L24.0 472.39L27.2 469.19" fill="none" stroke="#3a3a3a" stroke-width="1.1"/><path d="M33.9 467.39h3.6l1,1h5.6v8.3h-10.2z" fill="#f6eeac" stroke="#dccf84" stroke-width="0.8"/><path d="M36.1 480.90L39.7 483.80L36.1 486.70" fill="none" stroke="#8a8a8a" stroke-width="0.9"/><path d="M52.8 478.80v7" stroke="#3a78d8" stroke-width="0.9"/><path d="M51.099999999999994 484.30l1.7,2.5l1.7,-2.5z" fill="#3a78d8"/><path d="M47.8 488.30h11" stroke="#555" stroke-width="1"/><path d="M36.1 493.71L39.7 496.61L36.1 499.51" fill="none" stroke="#8a8a8a" stroke-width="0.9"/><rect x="48.3" y="492.11" width="3" height="2" fill="none" stroke="#444" stroke-width="0.6"/><rect x="48.3" y="499.11" width="3" height="2" fill="none" stroke="#444" stroke-width="0.6"/><path d="M51.3 493.11h3l2,3.5l-2,3.5h-3" fill="none" stroke="#444" stroke-width="0.8"/><path d="M55.8 494.61l3,2l-3,2z" fill="#3a78d8"/><path d="M36.1 506.52L39.7 509.42L36.1 512.32" fill="none" stroke="#8a8a8a" stroke-width="0.9"/><rect x="48.3" y="504.92" width="3" height="2" fill="none" stroke="#444" stroke-width="0.6"/><rect x="48.3" y="511.92" width="3" height="2" fill="none" stroke="#444" stroke-width="0.6"/><path d="M51.3 505.92h3l2,3.5l-2,3.5h-3" fill="none" stroke="#444" stroke-width="0.8"/><path d="M55.8 507.42l3,2l-3,2z" fill="#e020e0"/><rect x="48.099999999999994" y="504.62" width="3.4" height="2.4" fill="#3a78d8"/><rect x="48.099999999999994" y="511.72" width="3.4" height="2.4" fill="#20a030"/><rect x="48.3" y="517.73" width="3" height="2" fill="none" stroke="#444" stroke-width="0.6"/><rect x="48.3" y="524.73" width="3" height="2" fill="none" stroke="#444" stroke-width="0.6"/><path d="M51.3 518.73h3l2,3.5l-2,3.5h-3" fill="none" stroke="#444" stroke-width="0.8"/><path d="M55.8 520.23l3,2l-3,2z" fill="#3a78d8"/><rect x="48.3" y="530.54" width="3" height="2" fill="none" stroke="#444" stroke-width="0.6"/><rect x="48.3" y="537.54" width="3" height="2" fill="none" stroke="#444" stroke-width="0.6"/><path d="M51.3 531.54h3l2,3.5l-2,3.5h-3" fill="none" stroke="#444" stroke-width="0.8"/><path d="M55.8 533.04l3,2l-3,2z" fill="#20b040"/><path d="M36.1 544.95L39.7 547.85L36.1 550.75" fill="none" stroke="#8a8a8a" stroke-width="0.9"/><path d="M47.8 547.35L58.3 544.35L58.3 547.85z" fill="#d02020"/><path d="M47.8 547.35L53.8 546.35L53.8 548.35z" fill="#2040c0"/><circle cx="55.3" cy="550.65" r="1.8" fill="none" stroke="#5080e0" stroke-width="0.9"/><path d="M36.1 557.76L39.7 560.66L36.1 563.56" fill="none" stroke="#8a8a8a" stroke-width="0.9"/><rect x="48.3" y="556.16" width="3" height="2" fill="none" stroke="#444" stroke-width="0.6"/><rect x="48.3" y="563.16" width="3" height="2" fill="none" stroke="#444" stroke-width="0.6"/><path d="M51.3 557.16h3l2,3.5l-2,3.5h-3" fill="none" stroke="#444" stroke-width="0.8"/><path d="M55.8 558.66l3,2l-3,2z" fill="#333"/><rect x="48.099999999999994" y="568.47" width="10" height="10.2" fill="#fff" stroke="#333" stroke-width="0.8"/><text x="53.099999999999994" y="577.07" font-family="Liberation Sans" font-size="9" text-anchor="middle" fill="#222">?</text><path d="M20.8 583.38L24.4 586.28L20.8 589.18" fill="none" stroke="#8a8a8a" stroke-width="0.9"/><path d="M33.9 582.68h3.6l1,1h5.6v8.3h-10.2z" fill="#f6eeac" stroke="#dccf84" stroke-width="0.8"/><path d="M20.8 597.29L24.0 600.49L27.2 597.29" fill="none" stroke="#3a3a3a" stroke-width="1.1"/><path d="M33.9 595.49h3.6l1,1h5.6v8.3h-10.2z" fill="#f6eeac" stroke="#dccf84" stroke-width="0.8"/><path d="M36.1 609.00L39.7 611.90L36.1 614.80" fill="none" stroke="#8a8a8a" stroke-width="0.9"/><path d="M48.2 608.30h3.6l1,1h5.6v8.3h-10.2z" fill="#f6eeac" stroke="#dccf84" stroke-width="0.8"/><path d="M20.8 621.81L24.4 624.71L20.8 627.61" fill="none" stroke="#8a8a8a" stroke-width="0.9"/><path d="M33.9 621.11h3.6l1,1h5.6v8.3h-10.2z" fill="#f6eeac" stroke="#dccf84" stroke-width="0.8"/><path d="M20.8 634.62L24.4 637.52L20.8 640.42" fill="none" stroke="#8a8a8a" stroke-width="0.9"/><path d="M33.9 633.92h3.6l1,1h5.6v8.3h-10.2z" fill="#f6eeac" stroke="#dccf84" stroke-width="0.8"/><path d="M33.9 646.73h3.6l1,1h5.6v8.3h-10.2z" fill="#f6eeac" stroke="#dccf84" stroke-width="0.8"/></svg>
<div class="a" style="left:0;top:0;width:204.8px;height:720px;overflow:hidden"><div class="t tr" style="left:20px;top:95.40px;">RFEM</div><div class="t tr" style="left:34.7px;top:108.21px;font-weight:bold;letter-spacing:-0.25px;">Partes de superficies independientes.rf6*</div><div class="t tr" style="left:48.3px;top:121.02px;">Objetos básicos</div><div class="t tr" style="left:62.5px;top:133.83px;">Materiales</div><div class="t tr" style="left:62.5px;top:146.64px;">Secciones</div><div class="t tr" style="left:62.5px;top:159.45px;">Espesores</div><div class="t tr" style="left:62.5px;top:172.26px;">Nudos</div><div class="t tr" style="left:62.5px;top:185.07px;">Líneas</div><div class="t tr" style="left:62.5px;top:197.88px;">Barras</div><div class="t tr" style="left:62.5px;top:210.69px;">Superficies</div><div class="t tr" style="left:73.4px;top:223.50px">1 - 1-3,12 | Estándar | Plana | <span style="color:#2a2aa0">1 - Uniforme</span></div><div class="t tr" style="left:73.4px;top:236.31px">2 - 13,21,17,22 | Estándar | Plana | <span style="color:#2a2aa0">1 - Uniforme</span></div><div class="t tr" style="left:73.4px;top:249.12px">3 - 14,22,18,23 | Estándar | Plana | <span style="color:#2a2aa0">1 - Uniforme</span></div><div class="t tr" style="left:73.4px;top:261.93px">4 - 15,23,19,24 | Estándar | Plana | <span style="color:#2a2aa0">1 - Uniforme</span></div><div class="t tr" style="left:73.4px;top:274.74px">5 - 16,24,20,21 | Estándar | Plana | <span style="color:#2a2aa0">1 - Uniforme</span></div><div class="t tr" style="left:62.5px;top:287.55px;">Aberturas</div><div class="t tr" style="left:62.5px;top:300.36px;">Sólidos</div><div class="t tr" style="left:62.5px;top:313.17px;">Conjuntos de líneas</div><div class="t tr" style="left:62.5px;top:325.98px;">Conjuntos de barras</div><div class="t tr" style="left:62.5px;top:338.79px;">Conjuntos de superficies</div><div class="t tr" style="left:62.5px;top:351.60px;">Conjuntos de sólidos</div><div class="t tr" style="left:48.3px;top:364.41px;">Objetos especiales</div><div class="t tr" style="left:48.3px;top:377.22px;">Tipos para nudos</div><div class="t tr" style="left:48.3px;top:390.03px;">Tipos para líneas</div><div class="t tr" style="left:48.3px;top:402.84px;">Tipos para barras</div><div class="t tr" style="left:48.3px;top:415.65px;">Tipos para superficies</div><div class="t tr" style="left:48.3px;top:428.46px;">Tipos para sólidos</div><div class="t tr" style="left:48.3px;top:441.27px;">Tipos para objetos especiales</div><div class="t tr" style="left:48.3px;top:454.08px;">Imperfecciones</div><div class="t tr" style="left:48.3px;top:466.89px;">Casos de carga y combinaciones</div><div class="t tr" style="left:62.5px;top:479.70px;">Casos de carga</div><div class="t tr" style="left:62.5px;top:492.51px;">Acciones</div><div class="t tr" style="left:62.5px;top:505.32px;">Situaciones de proyecto</div><div class="t tr" style="left:62.5px;top:518.13px;">Combinaciones de acciones</div><div class="t tr" style="left:62.5px;top:530.94px;">Combinaciones de carga</div><div class="t tr" style="left:62.5px;top:543.75px;">Configuración del análisis estático</div><div class="t tr" style="left:62.5px;top:556.56px;">Asistentes para combinaciones</div><div class="t tr" style="left:62.5px;top:569.37px;">Relationship between Load Cases</div><div class="t tr" style="left:48.3px;top:582.18px;">Asistentes para cargas</div><div class="t tr" style="left:48.3px;top:594.99px;">Cargas</div><div class="t tr" style="left:62.5px;top:607.80px;">CC1</div><div class="t tr" style="left:48.3px;top:620.61px;">Resultados</div><div class="t tr" style="left:48.3px;top:633.42px;">Objetos auxiliares</div><div class="t tr" style="left:48.3px;top:646.23px;">Informes</div></div>
<div class="a" style="left:2px;top:720.2px;width:204px;height:10.9px;background:#f0f0f0"></div>
<div class="a" style="left:15.4px;top:721.3px;width:112.8px;height:8.8px;background:#cdcdcd"></div>
<div class="a" style="left:2.5px;top:731.1px;width:28px;height:19px;background:#fff;border-left:1px solid #d8d8d8;border-right:1px solid #d8d8d8"></div>
<div class="a" style="left:30.8px;top:731.6px;width:25.6px;height:17.4px;background:#ebebeb;border-right:1px solid #d0d0d8"></div>
<div class="a" style="left:57.4px;top:731.6px;width:27.7px;height:17.4px;background:#ebebeb;border-right:1px solid #d0d0d8"></div>
<div class="a" style="left:2px;top:749.5px;width:204px;height:1px;background:#d8d8d8"></div>
<svg class="a" style="left:0;top:718px" width="207" height="34" viewBox="0 718 207 34"><path d="M10 723l-2.8 2.8l2.8 2.8M198.2 723l2.8 2.8l-2.8 2.8" fill="none" stroke="#333" stroke-width="1"/><rect x="11" y="734.5" width="10" height="7.5" fill="#fff" stroke="#3060b0" stroke-width="1"/><rect x="11" y="734.5" width="10" height="1.8" fill="#3060b0"/><path d="M10 743l4 -5h6l-4 5z" fill="#f0c030"/><path d="M15 742q3 -4 6 0" stroke="#3070c0" stroke-width="1.2" fill="none"/><circle cx="17" cy="744" r="1" fill="#e02020"/><ellipse cx="42.8" cy="740" rx="4.2" ry="2.6" fill="#2a3a90"/><ellipse cx="42.8" cy="740" rx="2.6" ry="1.4" fill="#fff"/><circle cx="42.8" cy="740" r="1" fill="#2a3a90"/><rect x="66.5" y="737" width="6.5" height="6" rx="0.8" fill="#555"/><path d="M73 740l3.5 -2.5v5z" fill="#555"/></svg>
<div class="t tr" style="left:5.1px;top:755.1px">Superficie núm. 1: Plana</div>
<svg class="a" style="left:207px;top:75.8px" width="815" height="528.2" viewBox="207 75.8 815 528.2"><rect x="207" y="75.8" width="815" height="528.2" fill="#ffffff"/><defs><clipPath id="vpc"><rect x="209.8" y="76" width="812" height="528"/></clipPath></defs><polygon points="105.80,10.65 1387.00,115.25 1120.20,616.45 -161.00,511.85" fill="#f9f9f9"/><polygon points="359.40,162.10 1000.00,214.40 866.60,465.00 226.00,412.70" fill="#bababa"/><defs><clipPath id="plc"><polygon points="359.40,162.10 1000.00,214.40 866.60,465.00 226.00,412.70"/></clipPath></defs><polygon points="535.60,243.28 562.28,193.16 658.37,201.01 658.37,502.11 631.69,552.23 535.60,544.38" fill="#a3a3a3"/><polygon points="562.28,494.26 658.37,502.11 631.69,552.23 535.60,544.38" fill="#bebebe"/><polygon points="535.60,243.28 562.28,193.16 658.37,201.01 658.37,502.11 631.69,552.23 535.60,544.38" fill="#8c8c8c" clip-path="url(#plc)"/><polygon points="535.60,243.28 562.28,193.16 658.37,201.01 658.37,291.11 631.69,341.23 535.60,333.38" fill="#9c9c9c"/><polygon points="631.69,251.13 658.37,201.01 658.37,291.11 631.69,341.23" fill="#a4a4a4"/><polygon points="562.28,193.16 658.37,201.01 631.69,251.13 535.60,243.28" fill="#a6a6a6"/><line x1="105.80" y1="10.65" x2="1387.00" y2="115.25" stroke="#8a8a8a" stroke-width="0.7" opacity="0.3"/><line x1="105.80" y1="10.65" x2="-161.00" y2="511.85" stroke="#8a8a8a" stroke-width="0.7" opacity="0.3"/><line x1="39.10" y1="135.95" x2="1320.30" y2="240.55" stroke="#8a8a8a" stroke-width="0.7" opacity="0.3"/><line x1="426.10" y1="36.80" x2="159.30" y2="538.00" stroke="#8a8a8a" stroke-width="0.7" opacity="0.3"/><line x1="-27.60" y1="261.25" x2="1253.60" y2="365.85" stroke="#8a8a8a" stroke-width="0.7" opacity="0.3"/><line x1="746.40" y1="62.95" x2="479.60" y2="564.15" stroke="#8a8a8a" stroke-width="0.7" opacity="0.3"/><line x1="-94.30" y1="386.55" x2="1186.90" y2="491.15" stroke="#8a8a8a" stroke-width="0.7" opacity="0.3"/><line x1="1066.70" y1="89.10" x2="799.90" y2="590.30" stroke="#8a8a8a" stroke-width="0.7" opacity="0.3"/><line x1="-161.00" y1="511.85" x2="1120.20" y2="616.45" stroke="#8a8a8a" stroke-width="0.7" opacity="0.3"/><line x1="1387.00" y1="115.25" x2="1120.20" y2="616.45" stroke="#8a8a8a" stroke-width="0.7" opacity="0.3"/><path d="M232.00 85.78h1.2v1.2h-1.2zM225.33 98.31h1.2v1.2h-1.2zM218.66 110.84h1.2v1.2h-1.2zM211.99 123.37h1.2v1.2h-1.2zM270.70 75.86h1.2v1.2h-1.2zM264.03 88.39h1.2v1.2h-1.2zM257.36 100.92h1.2v1.2h-1.2zM250.69 113.45h1.2v1.2h-1.2zM244.02 125.98h1.2v1.2h-1.2zM237.35 138.51h1.2v1.2h-1.2zM230.68 151.04h1.2v1.2h-1.2zM224.01 163.57h1.2v1.2h-1.2zM217.34 176.10h1.2v1.2h-1.2zM210.67 188.63h1.2v1.2h-1.2zM302.73 78.48h1.2v1.2h-1.2zM296.06 91.00h1.2v1.2h-1.2zM289.39 103.53h1.2v1.2h-1.2zM282.72 116.06h1.2v1.2h-1.2zM276.05 128.59h1.2v1.2h-1.2zM269.38 141.12h1.2v1.2h-1.2zM262.71 153.66h1.2v1.2h-1.2zM256.04 166.19h1.2v1.2h-1.2zM249.37 178.72h1.2v1.2h-1.2zM242.70 191.25h1.2v1.2h-1.2zM236.03 203.78h1.2v1.2h-1.2zM229.36 216.31h1.2v1.2h-1.2zM222.69 228.84h1.2v1.2h-1.2zM216.02 241.36h1.2v1.2h-1.2zM209.35 253.90h1.2v1.2h-1.2zM334.76 81.09h1.2v1.2h-1.2zM328.09 93.62h1.2v1.2h-1.2zM321.42 106.15h1.2v1.2h-1.2zM314.75 118.68h1.2v1.2h-1.2zM308.08 131.21h1.2v1.2h-1.2zM301.41 143.74h1.2v1.2h-1.2zM294.74 156.27h1.2v1.2h-1.2zM288.07 168.80h1.2v1.2h-1.2zM281.40 181.33h1.2v1.2h-1.2zM274.73 193.86h1.2v1.2h-1.2zM268.06 206.39h1.2v1.2h-1.2zM261.39 218.92h1.2v1.2h-1.2zM254.72 231.45h1.2v1.2h-1.2zM248.05 243.98h1.2v1.2h-1.2zM241.38 256.51h1.2v1.2h-1.2zM234.71 269.04h1.2v1.2h-1.2zM228.04 281.57h1.2v1.2h-1.2zM221.37 294.10h1.2v1.2h-1.2zM214.70 306.63h1.2v1.2h-1.2zM208.03 319.16h1.2v1.2h-1.2zM366.79 83.70h1.2v1.2h-1.2zM360.12 96.23h1.2v1.2h-1.2zM353.45 108.76h1.2v1.2h-1.2zM346.78 121.29h1.2v1.2h-1.2zM340.11 133.82h1.2v1.2h-1.2zM333.44 146.35h1.2v1.2h-1.2zM326.77 158.88h1.2v1.2h-1.2zM320.10 171.41h1.2v1.2h-1.2zM313.43 183.94h1.2v1.2h-1.2zM306.76 196.47h1.2v1.2h-1.2zM300.09 209.00h1.2v1.2h-1.2zM293.42 221.53h1.2v1.2h-1.2zM286.75 234.06h1.2v1.2h-1.2zM280.08 246.59h1.2v1.2h-1.2zM273.41 259.12h1.2v1.2h-1.2zM266.74 271.65h1.2v1.2h-1.2zM260.07 284.18h1.2v1.2h-1.2zM253.40 296.71h1.2v1.2h-1.2zM246.73 309.24h1.2v1.2h-1.2zM240.06 321.77h1.2v1.2h-1.2zM233.39 334.30h1.2v1.2h-1.2zM226.72 346.83h1.2v1.2h-1.2zM220.05 359.37h1.2v1.2h-1.2zM213.38 371.89h1.2v1.2h-1.2zM206.71 384.42h1.2v1.2h-1.2zM398.82 86.32h1.2v1.2h-1.2zM392.15 98.85h1.2v1.2h-1.2zM385.48 111.38h1.2v1.2h-1.2zM378.81 123.91h1.2v1.2h-1.2zM372.14 136.44h1.2v1.2h-1.2zM365.47 148.97h1.2v1.2h-1.2zM358.80 161.50h1.2v1.2h-1.2zM352.13 174.03h1.2v1.2h-1.2zM345.46 186.56h1.2v1.2h-1.2zM338.79 199.09h1.2v1.2h-1.2zM332.12 211.62h1.2v1.2h-1.2zM325.45 224.15h1.2v1.2h-1.2zM318.78 236.68h1.2v1.2h-1.2zM312.11 249.21h1.2v1.2h-1.2zM305.44 261.74h1.2v1.2h-1.2zM298.77 274.27h1.2v1.2h-1.2zM292.10 286.80h1.2v1.2h-1.2zM285.43 299.33h1.2v1.2h-1.2zM278.76 311.86h1.2v1.2h-1.2zM272.09 324.39h1.2v1.2h-1.2zM265.42 336.92h1.2v1.2h-1.2zM258.75 349.45h1.2v1.2h-1.2zM252.08 361.98h1.2v1.2h-1.2zM245.41 374.51h1.2v1.2h-1.2zM238.74 387.04h1.2v1.2h-1.2zM232.07 399.57h1.2v1.2h-1.2zM225.40 412.10h1.2v1.2h-1.2zM218.73 424.63h1.2v1.2h-1.2zM212.06 437.16h1.2v1.2h-1.2zM437.52 76.41h1.2v1.2h-1.2zM430.85 88.94h1.2v1.2h-1.2zM424.18 101.47h1.2v1.2h-1.2zM417.51 114.00h1.2v1.2h-1.2zM410.84 126.53h1.2v1.2h-1.2zM404.17 139.06h1.2v1.2h-1.2zM397.50 151.59h1.2v1.2h-1.2zM390.83 164.12h1.2v1.2h-1.2zM384.16 176.65h1.2v1.2h-1.2zM377.49 189.18h1.2v1.2h-1.2zM370.82 201.71h1.2v1.2h-1.2zM364.15 214.24h1.2v1.2h-1.2zM357.48 226.77h1.2v1.2h-1.2zM350.81 239.29h1.2v1.2h-1.2zM344.14 251.83h1.2v1.2h-1.2zM337.47 264.36h1.2v1.2h-1.2zM330.80 276.88h1.2v1.2h-1.2zM324.13 289.41h1.2v1.2h-1.2zM317.46 301.94h1.2v1.2h-1.2zM310.79 314.47h1.2v1.2h-1.2zM304.12 327.00h1.2v1.2h-1.2zM297.45 339.53h1.2v1.2h-1.2zM290.78 352.06h1.2v1.2h-1.2zM284.11 364.60h1.2v1.2h-1.2zM277.44 377.12h1.2v1.2h-1.2zM270.77 389.65h1.2v1.2h-1.2zM264.10 402.18h1.2v1.2h-1.2zM257.43 414.71h1.2v1.2h-1.2zM250.76 427.25h1.2v1.2h-1.2zM244.09 439.77h1.2v1.2h-1.2zM237.42 452.30h1.2v1.2h-1.2zM230.75 464.83h1.2v1.2h-1.2zM224.08 477.37h1.2v1.2h-1.2zM217.41 489.89h1.2v1.2h-1.2zM210.74 502.42h1.2v1.2h-1.2zM469.55 79.02h1.2v1.2h-1.2zM462.88 91.55h1.2v1.2h-1.2zM456.21 104.08h1.2v1.2h-1.2zM449.54 116.61h1.2v1.2h-1.2zM442.87 129.14h1.2v1.2h-1.2zM436.20 141.67h1.2v1.2h-1.2zM429.53 154.20h1.2v1.2h-1.2zM422.86 166.73h1.2v1.2h-1.2zM416.19 179.26h1.2v1.2h-1.2zM409.52 191.79h1.2v1.2h-1.2zM402.85 204.32h1.2v1.2h-1.2zM396.18 216.85h1.2v1.2h-1.2zM389.51 229.38h1.2v1.2h-1.2zM382.84 241.91h1.2v1.2h-1.2zM376.17 254.44h1.2v1.2h-1.2zM369.50 266.97h1.2v1.2h-1.2zM362.83 279.50h1.2v1.2h-1.2zM356.16 292.03h1.2v1.2h-1.2zM349.49 304.56h1.2v1.2h-1.2zM342.82 317.09h1.2v1.2h-1.2zM336.15 329.62h1.2v1.2h-1.2zM329.48 342.15h1.2v1.2h-1.2zM322.81 354.68h1.2v1.2h-1.2zM316.14 367.21h1.2v1.2h-1.2zM309.47 379.74h1.2v1.2h-1.2zM302.80 392.27h1.2v1.2h-1.2zM296.13 404.80h1.2v1.2h-1.2zM289.46 417.33h1.2v1.2h-1.2zM282.79 429.86h1.2v1.2h-1.2zM276.12 442.39h1.2v1.2h-1.2zM269.45 454.92h1.2v1.2h-1.2zM262.78 467.45h1.2v1.2h-1.2zM256.11 479.98h1.2v1.2h-1.2zM249.44 492.51h1.2v1.2h-1.2zM242.77 505.04h1.2v1.2h-1.2zM236.10 517.57h1.2v1.2h-1.2zM229.43 530.10h1.2v1.2h-1.2zM222.76 542.63h1.2v1.2h-1.2zM501.58 81.64h1.2v1.2h-1.2zM494.91 94.17h1.2v1.2h-1.2zM488.24 106.69h1.2v1.2h-1.2zM481.57 119.22h1.2v1.2h-1.2zM474.90 131.75h1.2v1.2h-1.2zM468.23 144.28h1.2v1.2h-1.2zM461.56 156.81h1.2v1.2h-1.2zM454.89 169.34h1.2v1.2h-1.2zM448.22 181.88h1.2v1.2h-1.2zM441.55 194.41h1.2v1.2h-1.2zM434.88 206.94h1.2v1.2h-1.2zM428.21 219.47h1.2v1.2h-1.2zM421.54 232.00h1.2v1.2h-1.2zM414.87 244.53h1.2v1.2h-1.2zM408.20 257.05h1.2v1.2h-1.2zM401.53 269.58h1.2v1.2h-1.2zM394.86 282.11h1.2v1.2h-1.2zM388.19 294.64h1.2v1.2h-1.2zM381.52 307.17h1.2v1.2h-1.2zM374.85 319.70h1.2v1.2h-1.2zM368.18 332.24h1.2v1.2h-1.2zM361.51 344.76h1.2v1.2h-1.2zM354.84 357.29h1.2v1.2h-1.2zM348.17 369.82h1.2v1.2h-1.2zM341.50 382.35h1.2v1.2h-1.2zM334.83 394.88h1.2v1.2h-1.2zM328.16 407.41h1.2v1.2h-1.2zM321.49 419.94h1.2v1.2h-1.2zM314.82 432.47h1.2v1.2h-1.2zM308.15 445.00h1.2v1.2h-1.2zM301.48 457.53h1.2v1.2h-1.2zM294.81 470.06h1.2v1.2h-1.2zM288.14 482.59h1.2v1.2h-1.2zM281.47 495.12h1.2v1.2h-1.2zM274.80 507.65h1.2v1.2h-1.2zM268.13 520.18h1.2v1.2h-1.2zM261.46 532.72h1.2v1.2h-1.2zM254.79 545.25h1.2v1.2h-1.2zM533.61 84.25h1.2v1.2h-1.2zM526.94 96.78h1.2v1.2h-1.2zM520.27 109.31h1.2v1.2h-1.2zM513.60 121.84h1.2v1.2h-1.2zM506.93 134.37h1.2v1.2h-1.2zM500.26 146.90h1.2v1.2h-1.2zM493.59 159.43h1.2v1.2h-1.2zM486.92 171.96h1.2v1.2h-1.2zM480.25 184.49h1.2v1.2h-1.2zM473.58 197.02h1.2v1.2h-1.2zM466.91 209.55h1.2v1.2h-1.2zM460.24 222.08h1.2v1.2h-1.2zM453.57 234.61h1.2v1.2h-1.2zM446.90 247.14h1.2v1.2h-1.2zM440.23 259.67h1.2v1.2h-1.2zM433.56 272.20h1.2v1.2h-1.2zM426.89 284.73h1.2v1.2h-1.2zM420.22 297.26h1.2v1.2h-1.2zM413.55 309.79h1.2v1.2h-1.2zM406.88 322.32h1.2v1.2h-1.2zM400.21 334.85h1.2v1.2h-1.2zM393.54 347.38h1.2v1.2h-1.2zM386.87 359.91h1.2v1.2h-1.2zM380.20 372.44h1.2v1.2h-1.2zM373.53 384.97h1.2v1.2h-1.2zM366.86 397.50h1.2v1.2h-1.2zM360.19 410.03h1.2v1.2h-1.2zM353.52 422.56h1.2v1.2h-1.2zM346.85 435.09h1.2v1.2h-1.2zM340.18 447.62h1.2v1.2h-1.2zM333.51 460.15h1.2v1.2h-1.2zM326.84 472.68h1.2v1.2h-1.2zM320.17 485.21h1.2v1.2h-1.2zM313.50 497.74h1.2v1.2h-1.2zM306.83 510.27h1.2v1.2h-1.2zM300.16 522.80h1.2v1.2h-1.2zM293.49 535.33h1.2v1.2h-1.2zM286.82 547.86h1.2v1.2h-1.2zM565.64 86.86h1.2v1.2h-1.2zM558.97 99.39h1.2v1.2h-1.2zM552.30 111.92h1.2v1.2h-1.2zM545.63 124.45h1.2v1.2h-1.2zM538.96 136.98h1.2v1.2h-1.2zM532.29 149.51h1.2v1.2h-1.2zM525.62 162.04h1.2v1.2h-1.2zM518.95 174.57h1.2v1.2h-1.2zM512.28 187.10h1.2v1.2h-1.2zM505.61 199.63h1.2v1.2h-1.2zM498.94 212.16h1.2v1.2h-1.2zM492.27 224.69h1.2v1.2h-1.2zM485.60 237.22h1.2v1.2h-1.2zM478.93 249.75h1.2v1.2h-1.2zM472.26 262.28h1.2v1.2h-1.2zM465.59 274.81h1.2v1.2h-1.2zM458.92 287.34h1.2v1.2h-1.2zM452.25 299.87h1.2v1.2h-1.2zM445.58 312.40h1.2v1.2h-1.2zM438.91 324.93h1.2v1.2h-1.2zM432.24 337.46h1.2v1.2h-1.2zM425.57 349.99h1.2v1.2h-1.2zM418.90 362.52h1.2v1.2h-1.2zM412.23 375.05h1.2v1.2h-1.2zM405.56 387.58h1.2v1.2h-1.2zM398.89 400.11h1.2v1.2h-1.2zM392.22 412.64h1.2v1.2h-1.2zM385.55 425.17h1.2v1.2h-1.2zM378.88 437.70h1.2v1.2h-1.2zM372.21 450.24h1.2v1.2h-1.2zM365.54 462.76h1.2v1.2h-1.2zM358.87 475.29h1.2v1.2h-1.2zM352.20 487.82h1.2v1.2h-1.2zM345.53 500.36h1.2v1.2h-1.2zM338.86 512.88h1.2v1.2h-1.2zM332.19 525.41h1.2v1.2h-1.2zM325.52 537.94h1.2v1.2h-1.2zM318.85 550.47h1.2v1.2h-1.2zM604.34 76.95h1.2v1.2h-1.2zM597.67 89.48h1.2v1.2h-1.2zM591.00 102.01h1.2v1.2h-1.2zM584.33 114.54h1.2v1.2h-1.2zM577.66 127.07h1.2v1.2h-1.2zM570.99 139.60h1.2v1.2h-1.2zM564.32 152.13h1.2v1.2h-1.2zM557.65 164.66h1.2v1.2h-1.2zM550.98 177.19h1.2v1.2h-1.2zM544.31 189.72h1.2v1.2h-1.2zM537.64 202.25h1.2v1.2h-1.2zM530.97 214.78h1.2v1.2h-1.2zM524.30 227.31h1.2v1.2h-1.2zM517.63 239.84h1.2v1.2h-1.2zM510.96 252.37h1.2v1.2h-1.2zM504.29 264.90h1.2v1.2h-1.2zM497.62 277.43h1.2v1.2h-1.2zM490.95 289.96h1.2v1.2h-1.2zM484.28 302.49h1.2v1.2h-1.2zM477.61 315.02h1.2v1.2h-1.2zM470.94 327.55h1.2v1.2h-1.2zM464.27 340.08h1.2v1.2h-1.2zM457.60 352.61h1.2v1.2h-1.2zM450.93 365.14h1.2v1.2h-1.2zM444.26 377.67h1.2v1.2h-1.2zM437.59 390.20h1.2v1.2h-1.2zM430.92 402.73h1.2v1.2h-1.2zM424.25 415.26h1.2v1.2h-1.2zM417.58 427.79h1.2v1.2h-1.2zM410.91 440.32h1.2v1.2h-1.2zM404.24 452.85h1.2v1.2h-1.2zM397.57 465.38h1.2v1.2h-1.2zM390.90 477.91h1.2v1.2h-1.2zM384.23 490.44h1.2v1.2h-1.2zM377.56 502.97h1.2v1.2h-1.2zM370.89 515.50h1.2v1.2h-1.2zM364.22 528.03h1.2v1.2h-1.2zM357.55 540.56h1.2v1.2h-1.2zM350.88 553.09h1.2v1.2h-1.2zM636.37 79.56h1.2v1.2h-1.2zM629.70 92.10h1.2v1.2h-1.2zM623.03 104.63h1.2v1.2h-1.2zM616.36 117.16h1.2v1.2h-1.2zM609.69 129.69h1.2v1.2h-1.2zM603.02 142.22h1.2v1.2h-1.2zM596.35 154.75h1.2v1.2h-1.2zM589.68 167.28h1.2v1.2h-1.2zM583.01 179.81h1.2v1.2h-1.2zM576.34 192.34h1.2v1.2h-1.2zM569.67 204.87h1.2v1.2h-1.2zM563.00 217.40h1.2v1.2h-1.2zM556.33 229.93h1.2v1.2h-1.2zM549.66 242.46h1.2v1.2h-1.2zM542.99 254.98h1.2v1.2h-1.2zM536.32 267.51h1.2v1.2h-1.2zM529.65 280.04h1.2v1.2h-1.2zM522.98 292.57h1.2v1.2h-1.2zM516.31 305.10h1.2v1.2h-1.2zM509.64 317.63h1.2v1.2h-1.2zM502.97 330.16h1.2v1.2h-1.2zM496.30 342.69h1.2v1.2h-1.2zM489.63 355.22h1.2v1.2h-1.2zM482.96 367.75h1.2v1.2h-1.2zM476.29 380.28h1.2v1.2h-1.2zM469.62 392.81h1.2v1.2h-1.2zM462.95 405.34h1.2v1.2h-1.2zM456.28 417.88h1.2v1.2h-1.2zM449.61 430.40h1.2v1.2h-1.2zM442.94 442.93h1.2v1.2h-1.2zM436.27 455.47h1.2v1.2h-1.2zM429.60 468.00h1.2v1.2h-1.2zM422.93 480.52h1.2v1.2h-1.2zM416.26 493.05h1.2v1.2h-1.2zM409.59 505.59h1.2v1.2h-1.2zM402.92 518.12h1.2v1.2h-1.2zM396.25 530.64h1.2v1.2h-1.2zM389.58 543.17h1.2v1.2h-1.2zM382.91 555.70h1.2v1.2h-1.2zM668.40 82.18h1.2v1.2h-1.2zM661.73 94.71h1.2v1.2h-1.2zM655.06 107.24h1.2v1.2h-1.2zM648.39 119.77h1.2v1.2h-1.2zM641.72 132.30h1.2v1.2h-1.2zM635.05 144.83h1.2v1.2h-1.2zM628.38 157.36h1.2v1.2h-1.2zM621.71 169.89h1.2v1.2h-1.2zM615.04 182.42h1.2v1.2h-1.2zM608.37 194.95h1.2v1.2h-1.2zM601.70 207.48h1.2v1.2h-1.2zM595.03 220.01h1.2v1.2h-1.2zM588.36 232.54h1.2v1.2h-1.2zM581.69 245.07h1.2v1.2h-1.2zM575.02 257.60h1.2v1.2h-1.2zM568.35 270.13h1.2v1.2h-1.2zM561.68 282.66h1.2v1.2h-1.2zM555.01 295.19h1.2v1.2h-1.2zM548.34 307.72h1.2v1.2h-1.2zM541.67 320.25h1.2v1.2h-1.2zM535.00 332.78h1.2v1.2h-1.2zM528.33 345.31h1.2v1.2h-1.2zM521.66 357.84h1.2v1.2h-1.2zM514.99 370.37h1.2v1.2h-1.2zM508.32 382.90h1.2v1.2h-1.2zM501.65 395.43h1.2v1.2h-1.2zM494.98 407.96h1.2v1.2h-1.2zM488.31 420.49h1.2v1.2h-1.2zM481.64 433.02h1.2v1.2h-1.2zM474.97 445.55h1.2v1.2h-1.2zM468.30 458.08h1.2v1.2h-1.2zM461.63 470.61h1.2v1.2h-1.2zM454.96 483.14h1.2v1.2h-1.2zM448.29 495.67h1.2v1.2h-1.2zM441.62 508.20h1.2v1.2h-1.2zM434.95 520.73h1.2v1.2h-1.2zM428.28 533.26h1.2v1.2h-1.2zM421.61 545.79h1.2v1.2h-1.2zM414.94 558.32h1.2v1.2h-1.2zM700.43 84.79h1.2v1.2h-1.2zM693.76 97.33h1.2v1.2h-1.2zM687.09 109.86h1.2v1.2h-1.2zM680.42 122.38h1.2v1.2h-1.2zM673.75 134.91h1.2v1.2h-1.2zM667.08 147.44h1.2v1.2h-1.2zM660.41 159.97h1.2v1.2h-1.2zM653.74 172.50h1.2v1.2h-1.2zM647.07 185.03h1.2v1.2h-1.2zM640.40 197.56h1.2v1.2h-1.2zM633.73 210.09h1.2v1.2h-1.2zM627.06 222.62h1.2v1.2h-1.2zM620.39 235.16h1.2v1.2h-1.2zM613.72 247.69h1.2v1.2h-1.2zM607.05 260.21h1.2v1.2h-1.2zM600.38 272.74h1.2v1.2h-1.2zM593.71 285.27h1.2v1.2h-1.2zM587.04 297.80h1.2v1.2h-1.2zM580.37 310.33h1.2v1.2h-1.2zM573.70 322.87h1.2v1.2h-1.2zM567.03 335.39h1.2v1.2h-1.2zM560.36 347.92h1.2v1.2h-1.2zM553.69 360.45h1.2v1.2h-1.2zM547.02 372.98h1.2v1.2h-1.2zM540.35 385.51h1.2v1.2h-1.2zM533.68 398.04h1.2v1.2h-1.2zM527.01 410.57h1.2v1.2h-1.2zM520.34 423.10h1.2v1.2h-1.2zM513.67 435.63h1.2v1.2h-1.2zM507.00 448.16h1.2v1.2h-1.2zM500.33 460.69h1.2v1.2h-1.2zM493.66 473.22h1.2v1.2h-1.2zM486.99 485.75h1.2v1.2h-1.2zM480.32 498.28h1.2v1.2h-1.2zM473.65 510.81h1.2v1.2h-1.2zM466.98 523.34h1.2v1.2h-1.2zM460.31 535.87h1.2v1.2h-1.2zM453.64 548.40h1.2v1.2h-1.2zM446.97 560.93h1.2v1.2h-1.2zM732.46 87.41h1.2v1.2h-1.2zM725.79 99.94h1.2v1.2h-1.2zM719.12 112.47h1.2v1.2h-1.2zM712.45 125.00h1.2v1.2h-1.2zM705.78 137.53h1.2v1.2h-1.2zM699.11 150.06h1.2v1.2h-1.2zM692.44 162.59h1.2v1.2h-1.2zM685.77 175.12h1.2v1.2h-1.2zM679.10 187.65h1.2v1.2h-1.2zM672.43 200.18h1.2v1.2h-1.2zM665.76 212.71h1.2v1.2h-1.2zM659.09 225.24h1.2v1.2h-1.2zM652.42 237.77h1.2v1.2h-1.2zM645.75 250.30h1.2v1.2h-1.2zM639.08 262.83h1.2v1.2h-1.2zM632.41 275.36h1.2v1.2h-1.2zM625.74 287.89h1.2v1.2h-1.2zM619.07 300.42h1.2v1.2h-1.2zM612.40 312.95h1.2v1.2h-1.2zM605.73 325.48h1.2v1.2h-1.2zM599.06 338.01h1.2v1.2h-1.2zM592.39 350.54h1.2v1.2h-1.2zM585.72 363.07h1.2v1.2h-1.2zM579.05 375.60h1.2v1.2h-1.2zM572.38 388.13h1.2v1.2h-1.2zM565.71 400.66h1.2v1.2h-1.2zM559.04 413.19h1.2v1.2h-1.2zM552.37 425.72h1.2v1.2h-1.2zM545.70 438.25h1.2v1.2h-1.2zM539.03 450.78h1.2v1.2h-1.2zM532.36 463.31h1.2v1.2h-1.2zM525.69 475.84h1.2v1.2h-1.2zM519.02 488.37h1.2v1.2h-1.2zM512.35 500.90h1.2v1.2h-1.2zM505.68 513.43h1.2v1.2h-1.2zM499.01 525.96h1.2v1.2h-1.2zM492.34 538.49h1.2v1.2h-1.2zM485.67 551.02h1.2v1.2h-1.2zM479.00 563.55h1.2v1.2h-1.2zM771.16 77.50h1.2v1.2h-1.2zM764.49 90.03h1.2v1.2h-1.2zM757.82 102.56h1.2v1.2h-1.2zM751.15 115.09h1.2v1.2h-1.2zM744.48 127.62h1.2v1.2h-1.2zM737.81 140.15h1.2v1.2h-1.2zM731.14 152.68h1.2v1.2h-1.2zM724.47 165.21h1.2v1.2h-1.2zM717.80 177.74h1.2v1.2h-1.2zM711.13 190.27h1.2v1.2h-1.2zM704.46 202.80h1.2v1.2h-1.2zM697.79 215.33h1.2v1.2h-1.2zM691.12 227.86h1.2v1.2h-1.2zM684.45 240.39h1.2v1.2h-1.2zM677.78 252.92h1.2v1.2h-1.2zM671.11 265.44h1.2v1.2h-1.2zM664.44 277.97h1.2v1.2h-1.2zM657.77 290.50h1.2v1.2h-1.2zM651.10 303.03h1.2v1.2h-1.2zM644.43 315.56h1.2v1.2h-1.2zM637.76 328.10h1.2v1.2h-1.2zM631.09 340.62h1.2v1.2h-1.2zM624.42 353.15h1.2v1.2h-1.2zM617.75 365.68h1.2v1.2h-1.2zM611.08 378.21h1.2v1.2h-1.2zM604.41 390.75h1.2v1.2h-1.2zM597.74 403.27h1.2v1.2h-1.2zM591.07 415.80h1.2v1.2h-1.2zM584.40 428.33h1.2v1.2h-1.2zM577.73 440.87h1.2v1.2h-1.2zM571.06 453.39h1.2v1.2h-1.2zM564.39 465.93h1.2v1.2h-1.2zM557.72 478.45h1.2v1.2h-1.2zM551.05 490.98h1.2v1.2h-1.2zM544.38 503.51h1.2v1.2h-1.2zM537.71 516.04h1.2v1.2h-1.2zM531.04 528.57h1.2v1.2h-1.2zM524.37 541.10h1.2v1.2h-1.2zM517.70 553.63h1.2v1.2h-1.2zM511.03 566.16h1.2v1.2h-1.2zM803.19 80.11h1.2v1.2h-1.2zM796.52 92.64h1.2v1.2h-1.2zM789.85 105.17h1.2v1.2h-1.2zM783.18 117.70h1.2v1.2h-1.2zM776.51 130.23h1.2v1.2h-1.2zM769.84 142.76h1.2v1.2h-1.2zM763.17 155.29h1.2v1.2h-1.2zM756.50 167.82h1.2v1.2h-1.2zM749.83 180.35h1.2v1.2h-1.2zM743.16 192.88h1.2v1.2h-1.2zM736.49 205.41h1.2v1.2h-1.2zM729.82 217.94h1.2v1.2h-1.2zM723.15 230.47h1.2v1.2h-1.2zM716.48 243.00h1.2v1.2h-1.2zM709.81 255.53h1.2v1.2h-1.2zM703.14 268.06h1.2v1.2h-1.2zM696.47 280.59h1.2v1.2h-1.2zM689.80 293.12h1.2v1.2h-1.2zM683.13 305.65h1.2v1.2h-1.2zM676.46 318.18h1.2v1.2h-1.2zM669.79 330.71h1.2v1.2h-1.2zM663.12 343.24h1.2v1.2h-1.2zM656.45 355.77h1.2v1.2h-1.2zM649.78 368.30h1.2v1.2h-1.2zM643.11 380.83h1.2v1.2h-1.2zM636.44 393.36h1.2v1.2h-1.2zM629.77 405.89h1.2v1.2h-1.2zM623.10 418.42h1.2v1.2h-1.2zM616.43 430.95h1.2v1.2h-1.2zM609.76 443.48h1.2v1.2h-1.2zM603.09 456.01h1.2v1.2h-1.2zM596.42 468.54h1.2v1.2h-1.2zM589.75 481.07h1.2v1.2h-1.2zM583.08 493.60h1.2v1.2h-1.2zM576.41 506.13h1.2v1.2h-1.2zM569.74 518.66h1.2v1.2h-1.2zM563.07 531.19h1.2v1.2h-1.2zM556.40 543.72h1.2v1.2h-1.2zM549.73 556.25h1.2v1.2h-1.2zM543.06 568.78h1.2v1.2h-1.2zM835.22 82.73h1.2v1.2h-1.2zM828.55 95.25h1.2v1.2h-1.2zM821.88 107.79h1.2v1.2h-1.2zM815.21 120.32h1.2v1.2h-1.2zM808.54 132.84h1.2v1.2h-1.2zM801.87 145.38h1.2v1.2h-1.2zM795.20 157.91h1.2v1.2h-1.2zM788.53 170.44h1.2v1.2h-1.2zM781.86 182.97h1.2v1.2h-1.2zM775.19 195.50h1.2v1.2h-1.2zM768.52 208.03h1.2v1.2h-1.2zM761.85 220.56h1.2v1.2h-1.2zM755.18 233.09h1.2v1.2h-1.2zM748.51 245.62h1.2v1.2h-1.2zM741.84 258.14h1.2v1.2h-1.2zM735.17 270.67h1.2v1.2h-1.2zM728.50 283.20h1.2v1.2h-1.2zM721.83 295.74h1.2v1.2h-1.2zM715.16 308.26h1.2v1.2h-1.2zM708.49 320.79h1.2v1.2h-1.2zM701.82 333.32h1.2v1.2h-1.2zM695.15 345.85h1.2v1.2h-1.2zM688.48 358.38h1.2v1.2h-1.2zM681.81 370.91h1.2v1.2h-1.2zM675.14 383.44h1.2v1.2h-1.2zM668.47 395.98h1.2v1.2h-1.2zM661.80 408.50h1.2v1.2h-1.2zM655.13 421.03h1.2v1.2h-1.2zM648.46 433.56h1.2v1.2h-1.2zM641.79 446.09h1.2v1.2h-1.2zM635.12 458.62h1.2v1.2h-1.2zM628.45 471.15h1.2v1.2h-1.2zM621.78 483.68h1.2v1.2h-1.2zM615.11 496.21h1.2v1.2h-1.2zM608.44 508.75h1.2v1.2h-1.2zM601.77 521.27h1.2v1.2h-1.2zM595.10 533.80h1.2v1.2h-1.2zM588.43 546.33h1.2v1.2h-1.2zM581.76 558.87h1.2v1.2h-1.2zM575.09 571.39h1.2v1.2h-1.2zM867.25 85.34h1.2v1.2h-1.2zM860.58 97.87h1.2v1.2h-1.2zM853.91 110.40h1.2v1.2h-1.2zM847.24 122.93h1.2v1.2h-1.2zM840.57 135.46h1.2v1.2h-1.2zM833.90 147.99h1.2v1.2h-1.2zM827.23 160.52h1.2v1.2h-1.2zM820.56 173.05h1.2v1.2h-1.2zM813.89 185.58h1.2v1.2h-1.2zM807.22 198.11h1.2v1.2h-1.2zM800.55 210.64h1.2v1.2h-1.2zM793.88 223.17h1.2v1.2h-1.2zM787.21 235.70h1.2v1.2h-1.2zM780.54 248.23h1.2v1.2h-1.2zM773.87 260.76h1.2v1.2h-1.2zM767.20 273.29h1.2v1.2h-1.2zM760.53 285.82h1.2v1.2h-1.2zM753.86 298.35h1.2v1.2h-1.2zM747.19 310.88h1.2v1.2h-1.2zM740.52 323.41h1.2v1.2h-1.2zM733.85 335.94h1.2v1.2h-1.2zM727.18 348.47h1.2v1.2h-1.2zM720.51 361.00h1.2v1.2h-1.2zM713.84 373.53h1.2v1.2h-1.2zM707.17 386.06h1.2v1.2h-1.2zM700.50 398.59h1.2v1.2h-1.2zM693.83 411.12h1.2v1.2h-1.2zM687.16 423.65h1.2v1.2h-1.2zM680.49 436.18h1.2v1.2h-1.2zM673.82 448.71h1.2v1.2h-1.2zM667.15 461.24h1.2v1.2h-1.2zM660.48 473.77h1.2v1.2h-1.2zM653.81 486.30h1.2v1.2h-1.2zM647.14 498.83h1.2v1.2h-1.2zM640.47 511.36h1.2v1.2h-1.2zM633.80 523.89h1.2v1.2h-1.2zM627.13 536.42h1.2v1.2h-1.2zM620.46 548.95h1.2v1.2h-1.2zM613.79 561.48h1.2v1.2h-1.2zM607.12 574.01h1.2v1.2h-1.2zM905.95 75.42h1.2v1.2h-1.2zM899.28 87.95h1.2v1.2h-1.2zM892.61 100.48h1.2v1.2h-1.2zM885.94 113.02h1.2v1.2h-1.2zM879.27 125.55h1.2v1.2h-1.2zM872.60 138.07h1.2v1.2h-1.2zM865.93 150.60h1.2v1.2h-1.2zM859.26 163.13h1.2v1.2h-1.2zM852.59 175.66h1.2v1.2h-1.2zM845.92 188.19h1.2v1.2h-1.2zM839.25 200.72h1.2v1.2h-1.2zM832.58 213.25h1.2v1.2h-1.2zM825.91 225.78h1.2v1.2h-1.2zM819.24 238.31h1.2v1.2h-1.2zM812.57 250.84h1.2v1.2h-1.2zM805.90 263.37h1.2v1.2h-1.2zM799.23 275.90h1.2v1.2h-1.2zM792.56 288.43h1.2v1.2h-1.2zM785.89 300.96h1.2v1.2h-1.2zM779.22 313.49h1.2v1.2h-1.2zM772.55 326.02h1.2v1.2h-1.2zM765.88 338.55h1.2v1.2h-1.2zM759.21 351.08h1.2v1.2h-1.2zM752.54 363.62h1.2v1.2h-1.2zM745.87 376.14h1.2v1.2h-1.2zM739.20 388.67h1.2v1.2h-1.2zM732.53 401.20h1.2v1.2h-1.2zM725.86 413.73h1.2v1.2h-1.2zM719.19 426.26h1.2v1.2h-1.2zM712.52 438.79h1.2v1.2h-1.2zM705.85 451.32h1.2v1.2h-1.2zM699.18 463.85h1.2v1.2h-1.2zM692.51 476.38h1.2v1.2h-1.2zM685.84 488.91h1.2v1.2h-1.2zM679.17 501.44h1.2v1.2h-1.2zM672.50 513.98h1.2v1.2h-1.2zM665.83 526.50h1.2v1.2h-1.2zM659.16 539.03h1.2v1.2h-1.2zM652.49 551.56h1.2v1.2h-1.2zM645.82 564.09h1.2v1.2h-1.2zM639.15 576.62h1.2v1.2h-1.2zM937.98 78.04h1.2v1.2h-1.2zM931.31 90.57h1.2v1.2h-1.2zM924.64 103.10h1.2v1.2h-1.2zM917.97 115.63h1.2v1.2h-1.2zM911.30 128.16h1.2v1.2h-1.2zM904.63 140.69h1.2v1.2h-1.2zM897.96 153.22h1.2v1.2h-1.2zM891.29 165.75h1.2v1.2h-1.2zM884.62 178.28h1.2v1.2h-1.2zM877.95 190.81h1.2v1.2h-1.2zM871.28 203.34h1.2v1.2h-1.2zM864.61 215.87h1.2v1.2h-1.2zM857.94 228.40h1.2v1.2h-1.2zM851.27 240.93h1.2v1.2h-1.2zM844.60 253.46h1.2v1.2h-1.2zM837.93 265.99h1.2v1.2h-1.2zM831.26 278.52h1.2v1.2h-1.2zM824.59 291.05h1.2v1.2h-1.2zM817.92 303.58h1.2v1.2h-1.2zM811.25 316.11h1.2v1.2h-1.2zM804.58 328.64h1.2v1.2h-1.2zM797.91 341.17h1.2v1.2h-1.2zM791.24 353.70h1.2v1.2h-1.2zM784.57 366.23h1.2v1.2h-1.2zM777.90 378.76h1.2v1.2h-1.2zM771.23 391.29h1.2v1.2h-1.2zM764.56 403.82h1.2v1.2h-1.2zM757.89 416.35h1.2v1.2h-1.2zM751.22 428.88h1.2v1.2h-1.2zM744.55 441.41h1.2v1.2h-1.2zM737.88 453.94h1.2v1.2h-1.2zM731.21 466.47h1.2v1.2h-1.2zM724.54 479.00h1.2v1.2h-1.2zM717.87 491.53h1.2v1.2h-1.2zM711.20 504.06h1.2v1.2h-1.2zM704.53 516.59h1.2v1.2h-1.2zM697.86 529.12h1.2v1.2h-1.2zM691.19 541.65h1.2v1.2h-1.2zM684.52 554.18h1.2v1.2h-1.2zM677.85 566.71h1.2v1.2h-1.2zM671.18 579.24h1.2v1.2h-1.2zM970.01 80.66h1.2v1.2h-1.2zM963.34 93.19h1.2v1.2h-1.2zM956.67 105.72h1.2v1.2h-1.2zM950.00 118.25h1.2v1.2h-1.2zM943.33 130.78h1.2v1.2h-1.2zM936.66 143.31h1.2v1.2h-1.2zM929.99 155.84h1.2v1.2h-1.2zM923.32 168.37h1.2v1.2h-1.2zM916.65 180.90h1.2v1.2h-1.2zM909.98 193.43h1.2v1.2h-1.2zM903.31 205.96h1.2v1.2h-1.2zM896.64 218.49h1.2v1.2h-1.2zM889.97 231.02h1.2v1.2h-1.2zM883.30 243.55h1.2v1.2h-1.2zM876.63 256.07h1.2v1.2h-1.2zM869.96 268.60h1.2v1.2h-1.2zM863.29 281.13h1.2v1.2h-1.2zM856.62 293.66h1.2v1.2h-1.2zM849.95 306.19h1.2v1.2h-1.2zM843.28 318.72h1.2v1.2h-1.2zM836.61 331.25h1.2v1.2h-1.2zM829.94 343.78h1.2v1.2h-1.2zM823.27 356.31h1.2v1.2h-1.2zM816.60 368.85h1.2v1.2h-1.2zM809.93 381.38h1.2v1.2h-1.2zM803.26 393.90h1.2v1.2h-1.2zM796.59 406.44h1.2v1.2h-1.2zM789.92 418.96h1.2v1.2h-1.2zM783.25 431.50h1.2v1.2h-1.2zM776.58 444.02h1.2v1.2h-1.2zM769.91 456.55h1.2v1.2h-1.2zM763.24 469.08h1.2v1.2h-1.2zM756.57 481.62h1.2v1.2h-1.2zM749.90 494.14h1.2v1.2h-1.2zM743.23 506.67h1.2v1.2h-1.2zM736.56 519.21h1.2v1.2h-1.2zM729.89 531.74h1.2v1.2h-1.2zM723.22 544.26h1.2v1.2h-1.2zM716.55 556.79h1.2v1.2h-1.2zM709.88 569.32h1.2v1.2h-1.2zM703.21 581.85h1.2v1.2h-1.2zM1002.04 83.27h1.2v1.2h-1.2zM995.37 95.80h1.2v1.2h-1.2zM988.70 108.33h1.2v1.2h-1.2zM982.03 120.86h1.2v1.2h-1.2zM975.36 133.39h1.2v1.2h-1.2zM968.69 145.92h1.2v1.2h-1.2zM962.02 158.45h1.2v1.2h-1.2zM955.35 170.98h1.2v1.2h-1.2zM948.68 183.51h1.2v1.2h-1.2zM942.01 196.04h1.2v1.2h-1.2zM935.34 208.57h1.2v1.2h-1.2zM928.67 221.10h1.2v1.2h-1.2zM922.00 233.63h1.2v1.2h-1.2zM915.33 246.16h1.2v1.2h-1.2zM908.66 258.69h1.2v1.2h-1.2zM901.99 271.22h1.2v1.2h-1.2zM895.32 283.75h1.2v1.2h-1.2zM888.65 296.28h1.2v1.2h-1.2zM881.98 308.81h1.2v1.2h-1.2zM875.31 321.34h1.2v1.2h-1.2zM868.64 333.87h1.2v1.2h-1.2zM861.97 346.40h1.2v1.2h-1.2zM855.30 358.93h1.2v1.2h-1.2zM848.63 371.46h1.2v1.2h-1.2zM841.96 383.99h1.2v1.2h-1.2zM835.29 396.52h1.2v1.2h-1.2zM828.62 409.05h1.2v1.2h-1.2zM821.95 421.58h1.2v1.2h-1.2zM815.28 434.11h1.2v1.2h-1.2zM808.61 446.64h1.2v1.2h-1.2zM801.94 459.17h1.2v1.2h-1.2zM795.27 471.70h1.2v1.2h-1.2zM788.60 484.23h1.2v1.2h-1.2zM781.93 496.76h1.2v1.2h-1.2zM775.26 509.29h1.2v1.2h-1.2zM768.59 521.82h1.2v1.2h-1.2zM761.92 534.35h1.2v1.2h-1.2zM755.25 546.88h1.2v1.2h-1.2zM748.58 559.41h1.2v1.2h-1.2zM741.91 571.94h1.2v1.2h-1.2zM735.24 584.47h1.2v1.2h-1.2zM1020.73 110.94h1.2v1.2h-1.2zM1014.06 123.48h1.2v1.2h-1.2zM1007.39 136.01h1.2v1.2h-1.2zM1000.72 148.53h1.2v1.2h-1.2zM994.05 161.06h1.2v1.2h-1.2zM987.38 173.59h1.2v1.2h-1.2zM980.71 186.12h1.2v1.2h-1.2zM974.04 198.66h1.2v1.2h-1.2zM967.37 211.19h1.2v1.2h-1.2zM960.70 223.72h1.2v1.2h-1.2zM954.03 236.25h1.2v1.2h-1.2zM947.36 248.78h1.2v1.2h-1.2zM940.69 261.30h1.2v1.2h-1.2zM934.02 273.83h1.2v1.2h-1.2zM927.35 286.36h1.2v1.2h-1.2zM920.68 298.89h1.2v1.2h-1.2zM914.01 311.42h1.2v1.2h-1.2zM907.34 323.95h1.2v1.2h-1.2zM900.67 336.48h1.2v1.2h-1.2zM894.00 349.01h1.2v1.2h-1.2zM887.33 361.54h1.2v1.2h-1.2zM880.66 374.07h1.2v1.2h-1.2zM873.99 386.60h1.2v1.2h-1.2zM867.32 399.13h1.2v1.2h-1.2zM860.65 411.66h1.2v1.2h-1.2zM853.98 424.19h1.2v1.2h-1.2zM847.31 436.72h1.2v1.2h-1.2zM840.64 449.25h1.2v1.2h-1.2zM833.97 461.78h1.2v1.2h-1.2zM827.30 474.31h1.2v1.2h-1.2zM820.63 486.85h1.2v1.2h-1.2zM813.96 499.38h1.2v1.2h-1.2zM807.29 511.90h1.2v1.2h-1.2zM800.62 524.43h1.2v1.2h-1.2zM793.95 536.97h1.2v1.2h-1.2zM787.28 549.50h1.2v1.2h-1.2zM780.61 562.02h1.2v1.2h-1.2zM773.94 574.55h1.2v1.2h-1.2zM767.27 587.08h1.2v1.2h-1.2zM1019.41 176.21h1.2v1.2h-1.2zM1012.74 188.74h1.2v1.2h-1.2zM1006.07 201.27h1.2v1.2h-1.2zM999.40 213.80h1.2v1.2h-1.2zM992.73 226.33h1.2v1.2h-1.2zM986.06 238.86h1.2v1.2h-1.2zM979.39 251.39h1.2v1.2h-1.2zM972.72 263.92h1.2v1.2h-1.2zM966.05 276.45h1.2v1.2h-1.2zM959.38 288.98h1.2v1.2h-1.2zM952.71 301.51h1.2v1.2h-1.2zM946.04 314.04h1.2v1.2h-1.2zM939.37 326.57h1.2v1.2h-1.2zM932.70 339.10h1.2v1.2h-1.2zM926.03 351.63h1.2v1.2h-1.2zM919.36 364.16h1.2v1.2h-1.2zM912.69 376.69h1.2v1.2h-1.2zM906.02 389.22h1.2v1.2h-1.2zM899.35 401.75h1.2v1.2h-1.2zM892.68 414.28h1.2v1.2h-1.2zM886.01 426.81h1.2v1.2h-1.2zM879.34 439.34h1.2v1.2h-1.2zM872.67 451.87h1.2v1.2h-1.2zM866.00 464.40h1.2v1.2h-1.2zM859.33 476.93h1.2v1.2h-1.2zM852.66 489.46h1.2v1.2h-1.2zM845.99 501.99h1.2v1.2h-1.2zM839.32 514.52h1.2v1.2h-1.2zM832.65 527.05h1.2v1.2h-1.2zM825.98 539.58h1.2v1.2h-1.2zM819.31 552.11h1.2v1.2h-1.2zM812.64 564.64h1.2v1.2h-1.2zM805.97 577.17h1.2v1.2h-1.2zM799.30 589.70h1.2v1.2h-1.2zM1018.09 241.47h1.2v1.2h-1.2zM1011.42 254.00h1.2v1.2h-1.2zM1004.75 266.53h1.2v1.2h-1.2zM998.08 279.06h1.2v1.2h-1.2zM991.41 291.59h1.2v1.2h-1.2zM984.74 304.12h1.2v1.2h-1.2zM978.07 316.65h1.2v1.2h-1.2zM971.40 329.18h1.2v1.2h-1.2zM964.73 341.71h1.2v1.2h-1.2zM958.06 354.25h1.2v1.2h-1.2zM951.39 366.77h1.2v1.2h-1.2zM944.72 379.30h1.2v1.2h-1.2zM938.05 391.83h1.2v1.2h-1.2zM931.38 404.36h1.2v1.2h-1.2zM924.71 416.89h1.2v1.2h-1.2zM918.04 429.42h1.2v1.2h-1.2zM911.37 441.95h1.2v1.2h-1.2zM904.70 454.48h1.2v1.2h-1.2zM898.03 467.01h1.2v1.2h-1.2zM891.36 479.54h1.2v1.2h-1.2zM884.69 492.07h1.2v1.2h-1.2zM878.02 504.60h1.2v1.2h-1.2zM871.35 517.13h1.2v1.2h-1.2zM864.68 529.66h1.2v1.2h-1.2zM858.01 542.20h1.2v1.2h-1.2zM851.34 554.73h1.2v1.2h-1.2zM844.67 567.25h1.2v1.2h-1.2zM838.00 579.78h1.2v1.2h-1.2zM831.33 592.31h1.2v1.2h-1.2zM1016.77 306.74h1.2v1.2h-1.2zM1010.10 319.27h1.2v1.2h-1.2zM1003.43 331.80h1.2v1.2h-1.2zM996.76 344.33h1.2v1.2h-1.2zM990.09 356.86h1.2v1.2h-1.2zM983.42 369.39h1.2v1.2h-1.2zM976.75 381.92h1.2v1.2h-1.2zM970.08 394.45h1.2v1.2h-1.2zM963.41 406.98h1.2v1.2h-1.2zM956.74 419.51h1.2v1.2h-1.2zM950.07 432.04h1.2v1.2h-1.2zM943.40 444.57h1.2v1.2h-1.2zM936.73 457.10h1.2v1.2h-1.2zM930.06 469.63h1.2v1.2h-1.2zM923.39 482.16h1.2v1.2h-1.2zM916.72 494.69h1.2v1.2h-1.2zM910.05 507.22h1.2v1.2h-1.2zM903.38 519.75h1.2v1.2h-1.2zM896.71 532.28h1.2v1.2h-1.2zM890.04 544.81h1.2v1.2h-1.2zM883.37 557.34h1.2v1.2h-1.2zM876.70 569.87h1.2v1.2h-1.2zM870.03 582.40h1.2v1.2h-1.2zM863.36 594.93h1.2v1.2h-1.2zM1015.45 372.00h1.2v1.2h-1.2zM1008.78 384.53h1.2v1.2h-1.2zM1002.11 397.06h1.2v1.2h-1.2zM995.44 409.59h1.2v1.2h-1.2zM988.77 422.12h1.2v1.2h-1.2zM982.10 434.65h1.2v1.2h-1.2zM975.43 447.18h1.2v1.2h-1.2zM968.76 459.71h1.2v1.2h-1.2zM962.09 472.24h1.2v1.2h-1.2zM955.42 484.77h1.2v1.2h-1.2zM948.75 497.30h1.2v1.2h-1.2zM942.08 509.83h1.2v1.2h-1.2zM935.41 522.36h1.2v1.2h-1.2zM928.74 534.89h1.2v1.2h-1.2zM922.07 547.42h1.2v1.2h-1.2zM915.40 559.95h1.2v1.2h-1.2zM908.73 572.48h1.2v1.2h-1.2zM902.06 585.01h1.2v1.2h-1.2zM895.39 597.54h1.2v1.2h-1.2zM1020.80 424.74h1.2v1.2h-1.2zM1014.13 437.27h1.2v1.2h-1.2zM1007.46 449.80h1.2v1.2h-1.2zM1000.79 462.33h1.2v1.2h-1.2zM994.12 474.86h1.2v1.2h-1.2zM987.45 487.39h1.2v1.2h-1.2zM980.78 499.92h1.2v1.2h-1.2zM974.11 512.45h1.2v1.2h-1.2zM967.44 524.98h1.2v1.2h-1.2zM960.77 537.51h1.2v1.2h-1.2zM954.10 550.04h1.2v1.2h-1.2zM947.43 562.57h1.2v1.2h-1.2zM940.76 575.10h1.2v1.2h-1.2zM934.09 587.63h1.2v1.2h-1.2zM927.42 600.16h1.2v1.2h-1.2zM1019.48 490.00h1.2v1.2h-1.2zM1012.81 502.53h1.2v1.2h-1.2zM1006.14 515.06h1.2v1.2h-1.2zM999.47 527.59h1.2v1.2h-1.2zM992.80 540.12h1.2v1.2h-1.2zM986.13 552.65h1.2v1.2h-1.2zM979.46 565.18h1.2v1.2h-1.2zM972.79 577.71h1.2v1.2h-1.2zM966.12 590.25h1.2v1.2h-1.2zM959.45 602.77h1.2v1.2h-1.2zM1018.16 555.27h1.2v1.2h-1.2zM1011.49 567.80h1.2v1.2h-1.2zM1004.82 580.33h1.2v1.2h-1.2zM998.15 592.86h1.2v1.2h-1.2z" fill="#444" opacity="0.85"/><polyline points="1000.00,214.40 866.60,465.00 226.00,412.70 359.40,162.10" fill="none" stroke="#444" stroke-width="0.9"/><line x1="39.10" y1="135.95" x2="1320.30" y2="240.55" stroke="#56cbcb" stroke-width="1.4" clip-path="url(#vpc)"/><line x1="1066.70" y1="89.10" x2="799.90" y2="590.30" stroke="#56cbcb" stroke-width="1.4" clip-path="url(#vpc)"/><polyline points="359.40,162.10 1000.00,214.40 866.60,465.00" fill="none" stroke="#3f8f93" stroke-width="1.1"/><polygon points="384.76,177.25 961.30,224.31 841.24,449.86 264.70,402.78" fill="none" stroke="#f26a6a" stroke-width="0.9" stroke-dasharray="4.5 3"/><line x1="562.28" y1="193.16" x2="562.28" y2="494.26" stroke="#787878" stroke-width="0.6"/><line x1="562.28" y1="494.26" x2="658.37" y2="502.11" stroke="#787878" stroke-width="0.6"/><line x1="562.28" y1="494.26" x2="535.60" y2="544.38" stroke="#787878" stroke-width="0.6"/><line x1="562.28" y1="283.26" x2="658.37" y2="291.11" stroke="#787878" stroke-width="0.6"/><line x1="562.28" y1="283.26" x2="535.60" y2="333.38" stroke="#787878" stroke-width="0.6"/><line x1="535.60" y1="243.28" x2="535.60" y2="544.38" stroke="#6a6a6a" stroke-width="0.7"/><line x1="658.37" y1="201.01" x2="658.37" y2="502.11" stroke="#6a6a6a" stroke-width="0.7"/><line x1="631.69" y1="341.23" x2="658.37" y2="291.11" stroke="#6a6a6a" stroke-width="0.7"/><line x1="631.69" y1="552.23" x2="658.37" y2="502.11" stroke="#6a6a6a" stroke-width="0.7"/><line x1="562.28" y1="193.16" x2="658.37" y2="201.01" stroke="#333" stroke-width="0.9"/><line x1="658.37" y1="201.01" x2="631.69" y2="251.13" stroke="#333" stroke-width="0.9"/><line x1="631.69" y1="251.13" x2="535.60" y2="243.28" stroke="#333" stroke-width="0.9"/><line x1="535.60" y1="243.28" x2="562.28" y2="193.16" stroke="#333" stroke-width="0.9"/><line x1="631.69" y1="251.13" x2="631.69" y2="552.23" stroke="#333" stroke-width="0.9"/><line x1="535.60" y1="544.38" x2="631.69" y2="552.23" stroke="#333" stroke-width="0.9"/><line x1="535.60" y1="333.38" x2="631.69" y2="341.23" stroke="#333" stroke-width="0.9"/><circle cx="562.28" cy="193.16" r="1.3" fill="#ee1c1c"/><circle cx="658.37" cy="201.01" r="1.3" fill="#ee1c1c"/><circle cx="631.69" cy="251.13" r="1.3" fill="#ee1c1c"/><circle cx="535.60" cy="243.28" r="1.3" fill="#ee1c1c"/><circle cx="535.60" cy="544.38" r="1.3" fill="#ee1c1c"/><circle cx="631.69" cy="552.23" r="1.3" fill="#ee1c1c"/><circle cx="658.37" cy="502.11" r="1.3" fill="#ee1c1c"/><circle cx="562.28" cy="494.26" r="1.1" fill="#ee1c1c" opacity="0.6"/><circle cx="562.28" cy="283.26" r="1.2" fill="#e020e0"/><circle cx="658.37" cy="291.11" r="1.2" fill="#e020e0"/><circle cx="631.69" cy="341.23" r="1.2" fill="#e020e0"/><circle cx="535.60" cy="333.38" r="1.2" fill="#e020e0"/><circle cx="359.40" cy="162.10" r="1.3" fill="#ee1c1c"/><circle cx="226.00" cy="412.70" r="1.3" fill="#ee1c1c"/><circle cx="866.60" cy="465.00" r="1.3" fill="#ee1c1c"/><line x1="1000.0" y1="214.39999999999998" x2="976.0" y2="212.89999999999998" stroke="#20c020" stroke-width="1.2"/><path d="M973.0 212.7l5,-2v4z" fill="#20c020"/><line x1="1000.0" y1="214.39999999999998" x2="1000.0" y2="238.39999999999998" stroke="#1a1ad0" stroke-width="1.2"/><path d="M998.0 235.4h4l-2,5z" fill="#1a1ad0"/><line x1="1000.0" y1="214.39999999999998" x2="995.0" y2="224.39999999999998" stroke="#e02020" stroke-width="1.6"/><text x="989.0" y="232.39999999999998" font-family="Liberation Sans" font-size="7" fill="#e02020">X</text><circle cx="1000.00" cy="214.40" r="2" fill="#f0e020"/><text x="965.0" y="215.39999999999998" font-family="Liberation Sans" font-size="7" fill="#30c030">Y</text><text x="997.0" y="250.39999999999998" font-family="Liberation Sans" font-size="7.5" fill="#2020d0">Z</text><line x1="251.5" y1="561" x2="227.5" y2="559.5" stroke="#20c020" stroke-width="1.3"/><path d="M224.0 559.3l6,-2.3v4.6z" fill="#20c020"/><line x1="251.5" y1="561" x2="251.5" y2="583" stroke="#1a1ad0" stroke-width="1.3"/><path d="M248.9 581.0h5.2l-2.6,6z" fill="#1a1ad0"/><line x1="251.5" y1="561" x2="247.0" y2="571" stroke="#e02020" stroke-width="1.6"/><circle cx="251.5" cy="561" r="2.2" fill="#f4e400"/><text x="214.5" y="562.5" font-family="Liberation Sans" font-size="7.5" font-weight="bold" fill="#30c030">Y</text><text x="240.5" y="578" font-family="Liberation Sans" font-size="7.5" fill="#e02020">X</text><text x="248.7" y="598" font-family="Liberation Sans" font-size="7.5" fill="#2020d0">Z</text><polygon points="945.90,109.50 995.40,112.30 1003.75,94.90 955.30,90.20" fill="#c4c4c4" stroke="#1a1a1a" stroke-width="1.5"/><polygon points="995.40,112.30 1003.75,94.90 1003.50,139.00 993.90,157.90" fill="#b4b4b4" stroke="#1a1a1a" stroke-width="1.5"/><polygon points="945.90,109.50 995.40,112.30 993.90,157.90 945.90,154.30" fill="#e4e4e4" stroke="#1a1a1a" stroke-width="1.3"/><line x1="945.90" y1="120.25" x2="995.04" y2="123.24" stroke="#1a1a1a" stroke-width="1.7"/><line x1="945.90" y1="142.65" x2="994.29" y2="146.04" stroke="#1a1a1a" stroke-width="1.7"/><line x1="957.53" y1="110.16" x2="957.18" y2="155.15" stroke="#1a1a1a" stroke-width="1.7"/><line x1="957.53" y1="110.16" x2="966.69" y2="91.30" stroke="#1a1a1a" stroke-width="1.7"/><line x1="981.54" y1="111.52" x2="980.46" y2="156.89" stroke="#1a1a1a" stroke-width="1.7"/><line x1="981.54" y1="111.52" x2="990.18" y2="93.58" stroke="#1a1a1a" stroke-width="1.7"/><line x1="948.25" y1="104.67" x2="997.49" y2="107.95" stroke="#1a1a1a" stroke-width="1.5"/><line x1="997.49" y1="107.95" x2="996.30" y2="153.18" stroke="#1a1a1a" stroke-width="1.5"/><line x1="952.95" y1="95.03" x2="1001.66" y2="99.25" stroke="#1a1a1a" stroke-width="1.5"/><line x1="1001.66" y1="99.25" x2="1001.10" y2="143.72" stroke="#1a1a1a" stroke-width="1.5"/><line x1="995.04" y1="123.24" x2="1003.69" y2="105.48" stroke="#1a1a1a" stroke-width="1.5"/><line x1="994.29" y1="146.04" x2="1003.57" y2="127.53" stroke="#1a1a1a" stroke-width="1.5"/><text x="965" y="138" font-family="Liberation Sans" font-size="9.5" font-weight="bold" fill="#f07070">-X</text><text x="972" y="103" font-family="Liberation Sans" font-size="6" fill="#8080e0" transform="rotate(-10 975 101)">Z</text></svg><div class="a" style="left:335.2px;top:417px;width:224px;height:23.2px;background:#f9f9f9;border:1px solid #b8b8b8"></div><div class="t tr" style="left:338.2px;top:419.5px">Superficie núm. 1</div><div class="t tr" style="left:338.2px;top:429.4px;letter-spacing:-0.1px">1-3,12 | Estándar | Plana | 1 - Uniforme | d : 7.9 in | 2 - C25/30</div>
<div class="a" style="left:207.00px;top:604.00px;width:815.00px;height:146.00px;background:#f4f4f4;"></div><div class="a" style="left:206.00px;top:604.00px;width:1.00px;height:146.00px;background:#c8c8c8;"></div><div class="a" style="left:210.00px;top:606.40px;width:812.00px;height:14.60px;background:#d6e4f2;"></div><div class="t tr" style="left:214.00px;top:610.00px;letter-spacing:0.25px;color:#222;-webkit-text-stroke:0.3px #222">Materiales</div><svg class="a" style="left:990px;top:606px" width="32" height="15" viewBox="990 606 32 15"><rect x="997.3" y="610.8" width="4.6" height="4.6" fill="none" stroke="#333" stroke-width="0.9"/><path d="M998.8 610.8v-1.6h4.6v4.6h-1.5" fill="none" stroke="#333" stroke-width="0.9"/><path d="M1011.6 611.2l5.2 5.2M1016.8 611.2l-5.2 5.2" stroke="#333" stroke-width="1.1"/></svg><div class="a" style="left:210.00px;top:621.30px;width:812.00px;height:13.60px;background:#f6f6f6;"></div><div class="a" style="left:210.00px;top:634.90px;width:812.00px;height:2.30px;background:#eeeeee;"></div><div class="t tr" style="left:215.70px;top:625.30px;">Ir a</div><div class="t tr" style="left:238.40px;top:625.30px;">Edición</div><div class="t tr" style="left:276.80px;top:625.30px;">Selección</div><div class="t tr" style="left:321.90px;top:625.30px;">Ver</div><div class="t tr" style="left:345.00px;top:625.30px;">Configuración</div><div class="a" style="left:210.00px;top:637.20px;width:812.00px;height:18.80px;background:#f6f6f6;"></div><div class="a" style="left:210.90px;top:638.00px;width:161.00px;height:14.50px;background:#e6e8f4;"></div><div class="a" style="left:350.20px;top:638.00px;width:9.60px;height:14.50px;background:#d4d4d4;"></div><div class="t tr" style="left:228.40px;top:641.30px;">Estructura</div><div class="a" style="left:380.00px;top:638.00px;width:212.00px;height:14.50px;background:#e6e8f4;"></div><div class="a" style="left:569.00px;top:638.00px;width:10.00px;height:14.50px;background:#d4d4d4;"></div><div class="t tr" style="left:396.80px;top:641.30px;">Objetos básicos</div><div class="a" style="left:210.20px;top:656.00px;width:800.30px;height:65.80px;background:#ffffff;"></div><div class="a" style="left:210.20px;top:656.30px;width:800.30px;height:6.40px;background:#e3e3e3;"></div><div class="a" style="left:252.00px;top:663.40px;width:758.50px;height:21.80px;background:#f0f0f0;"></div><div class="a" style="left:210.20px;top:663.40px;width:41.80px;height:58.40px;background:#e6e6e6;"></div><div class="a" style="left:643.90px;top:685.20px;width:356.00px;height:23.00px;background:#f8f8ee;"></div><div class="a" style="left:785.50px;top:708.20px;width:71.90px;height:11.00px;background:#f8f8ee;"></div><div class="t tr" style="left:171.10px;width:120px;text-align:center;top:666.80px;">Material</div><div class="t tr" style="left:171.10px;width:120px;text-align:center;top:675.50px;">núm.</div><div class="t tr" style="left:281.25px;width:120px;text-align:center;top:675.50px;">Nombre del material</div><div class="t tr" style="left:405.95px;width:120px;text-align:center;top:666.80px;">Tipo de</div><div class="t tr" style="left:405.95px;width:120px;text-align:center;top:675.50px;">material</div><div class="t tr" style="left:512.65px;width:120px;text-align:center;top:675.50px;">Modelo de material</div><div class="t tr" style="left:619.55px;width:120px;text-align:center;top:665.00px;">Módulo de elast.</div><div class="t tr" style="left:619.55px;width:120px;text-align:center;top:676.60px;">E [ksi]</div><div class="t tr" style="left:690.35px;width:120px;text-align:center;top:665.00px;">Mód. de cortante</div><div class="t tr" style="left:690.35px;width:120px;text-align:center;top:676.60px;">G [ksi]</div><div class="t tr" style="left:761.45px;width:120px;text-align:center;top:665.00px;">Coef. de Poisson</div><div class="t tr" style="left:761.45px;width:120px;text-align:center;top:676.60px;">ν [--]</div><div class="t tr" style="left:833.10px;width:120px;text-align:center;top:665.00px;">Peso específico</div><div class="t tr" style="left:833.10px;width:120px;text-align:center;top:676.60px;">γ [lbf/ft³]</div><div class="t tr" style="left:904.20px;width:120px;text-align:center;top:676.60px;">ρ [lb/ft³]</div><div class="a" style="left:928.8px;top:656px;width:70.8px;height:20px;overflow:hidden"><div class="t tr" style="left:3px;top:9px">Densidad de la ma</div></div><div class="a" style="left:999.6px;top:656px;width:10.9px;height:20px;overflow:hidden"><div class="t tr" style="left:1.5px;top:9px">Co</div></div><div class="t tr" style="left:171.10px;width:120px;text-align:center;top:687.00px;">1</div><div class="t tr" style="left:171.10px;width:120px;text-align:center;top:698.70px;">2</div><div class="t tr" style="left:171.10px;width:120px;text-align:center;top:710.00px;">3</div><div class="a" style="left:253.80px;top:686.00px;width:175.50px;height:10.60px;background:#fff;border:1px solid #666"></div><div class="t tr" style="left:267.50px;top:687.50px;">S235</div><div class="t tr" style="left:267.50px;top:699.20px;">C25/30</div><div class="t tr" style="left:445.30px;top:687.50px;">Acero</div><div class="t tr" style="left:445.30px;top:699.20px;">Hormigón</div><div class="t tr" style="left:516.80px;top:687.50px;">Isótropo | Elástico lineal</div><div class="t tr" style="left:516.80px;top:699.20px;">Isótropo | Elástico lineal</div><div class="t tr" style="left:593.00px;width:120px;text-align:right;top:687.50px;">30457.925</div><div class="t tr" style="left:663.50px;width:120px;text-align:right;top:687.50px;">11714.586</div><div class="t tr" style="left:735.50px;width:120px;text-align:right;top:687.50px;">0.300</div><div class="t tr" style="left:807.00px;width:120px;text-align:right;top:687.50px;">499.722</div><div class="t tr" style="left:877.50px;width:120px;text-align:right;top:687.50px;">490.06</div><div class="t tr" style="left:593.00px;width:120px;text-align:right;top:699.20px;">4496.170</div><div class="t tr" style="left:663.50px;width:120px;text-align:right;top:699.20px;">1873.404</div><div class="t tr" style="left:735.50px;width:120px;text-align:right;top:699.20px;">0.200</div><div class="t tr" style="left:807.00px;width:120px;text-align:right;top:699.20px;">159.147</div><div class="t tr" style="left:877.50px;width:120px;text-align:right;top:699.20px;">156.07</div><div class="a" style="left:1010.50px;top:656.00px;width:11.50px;height:66.00px;background:#f0f0f0;"></div><div class="a" style="left:1011.50px;top:668.40px;width:9.50px;height:17.30px;background:#cdcdcd;"></div><div class="a" style="left:210.20px;top:721.80px;width:800.30px;height:12.30px;background:#f0f0f0;"></div><div class="a" style="left:223.00px;top:723.50px;width:704.00px;height:9.00px;background:#cdcdcd;"></div><div class="a" style="left:210.00px;top:734.00px;width:812.00px;height:16.50px;background:#f0f0f0;"></div><div class="t tr" style="left:242.10px;top:739.00px;color:#1e2850">1 de 13</div><div class="a" style="left:300.30px;top:734.00px;width:49.70px;height:16.50px;background:#ffffff;border:1px solid #d0d0d0;border-top:none"></div><div class="t tr" style="left:265.15px;width:120px;text-align:center;top:739.00px;">Materiales</div><div class="a" style="left:350.00px;top:735.50px;width:46.70px;height:13.50px;background:#ebebeb;border-right:1px solid #cfcfd8"></div><div class="t tr" style="left:313.35px;width:120px;text-align:center;top:739.00px;">Secciones</div><div class="a" style="left:396.70px;top:735.50px;width:48.00px;height:13.50px;background:#ebebeb;border-right:1px solid #cfcfd8"></div><div class="t tr" style="left:360.70px;width:120px;text-align:center;top:739.00px;">Espesores</div><div class="a" style="left:444.70px;top:735.50px;width:42.90px;height:13.50px;background:#ebebeb;border-right:1px solid #cfcfd8"></div><div class="t tr" style="left:406.15px;width:120px;text-align:center;top:739.00px;">Nudos</div><div class="a" style="left:487.60px;top:735.50px;width:43.90px;height:13.50px;background:#ebebeb;border-right:1px solid #cfcfd8"></div><div class="t tr" style="left:449.55px;width:120px;text-align:center;top:739.00px;">Líneas</div><div class="a" style="left:531.50px;top:735.50px;width:44.00px;height:13.50px;background:#ebebeb;border-right:1px solid #cfcfd8"></div><div class="t tr" style="left:493.50px;width:120px;text-align:center;top:739.00px;">Barras</div><div class="a" style="left:575.50px;top:735.50px;width:51.50px;height:13.50px;background:#ebebeb;border-right:1px solid #cfcfd8"></div><div class="t tr" style="left:541.25px;width:120px;text-align:center;top:739.00px;">Superficies</div><div class="a" style="left:627.00px;top:735.50px;width:43.40px;height:13.50px;background:#ebebeb;border-right:1px solid #cfcfd8"></div><div class="t tr" style="left:588.70px;width:120px;text-align:center;top:739.00px;">Aberturas</div><div class="a" style="left:670.40px;top:735.50px;width:45.60px;height:13.50px;background:#ebebeb;border-right:1px solid #cfcfd8"></div><div class="t tr" style="left:633.20px;width:120px;text-align:center;top:739.00px;">Sólidos</div><div class="a" style="left:716.00px;top:735.50px;width:84.30px;height:13.50px;background:#ebebeb;border-right:1px solid #cfcfd8"></div><div class="t tr" style="left:698.15px;width:120px;text-align:center;top:739.00px;">Conjuntos de líneas</div><div class="a" style="left:800.30px;top:735.50px;width:85.30px;height:13.50px;background:#ebebeb;border-right:1px solid #cfcfd8"></div><div class="t tr" style="left:782.95px;width:120px;text-align:center;top:739.00px;">Conjuntos de barras</div><div class="a" style="left:885.60px;top:735.50px;width:102.80px;height:13.50px;background:#ebebeb;border-right:1px solid #cfcfd8"></div><div class="t tr" style="left:877.00px;width:120px;text-align:center;top:739.00px;">Conjuntos de superficies</div><div class="a" style="left:988.40px;top:735.50px;width:15.00px;height:13.50px;background:#ebebeb;"></div><div class="a" style="left:988.4px;top:735px;width:13px;height:14px;overflow:hidden"><div class="t tr" style="left:2px;top:4px">Co</div></div><div class="a" style="left:207.00px;top:750.50px;width:815.00px;height:17.50px;background:#f0f0f0;"></div><div class="a" style="left:402.50px;top:753.00px;width:29.40px;height:15.00px;background:#ececec;border:1px solid #dedede;border-bottom:none"></div><div class="t tr" style="left:357.20px;width:120px;text-align:center;top:755.60px;font-size:8px;letter-spacing:-0.35px">FORZC</div><div class="a" style="left:434.00px;top:753.00px;width:31.30px;height:15.00px;background:#ececec;border:1px solid #dedede;border-bottom:none"></div><div class="t tr" style="left:389.65px;width:120px;text-align:center;top:755.60px;font-size:8px;letter-spacing:-0.35px">REJILLA</div><div class="a" style="left:467.00px;top:753.00px;width:29.00px;height:15.00px;background:#ececec;border:1px solid #dedede;border-bottom:none"></div><div class="t tr" style="left:421.50px;width:120px;text-align:center;top:755.60px;font-size:8px;letter-spacing:-0.35px">REJLIN</div><div class="a" style="left:498.00px;top:753.00px;width:33.50px;height:15.00px;background:#ececec;border:1px solid #dedede;border-bottom:none"></div><div class="t tr" style="left:454.75px;width:120px;text-align:center;top:755.60px;font-size:8px;letter-spacing:-0.35px">REFENT</div><div class="t tr" style="left:693.40px;top:755.50px;">SC: XYZ global</div><div class="t tr" style="left:804.00px;top:755.50px;">Plano: XY</div><div class="t tr" style="left:851.00px;top:755.50px;">X: 61.45 ft</div><div class="t tr" style="left:904.00px;top:755.50px;">Y: 55.71 ft</div><div class="t tr" style="left:959.00px;top:755.50px;">Z: 0.00 ft</div>
<svg class="a" style="left:0;top:0" width="1024" height="768" viewBox="0 0 1024 768"><rect x="215" y="640" width="9.6" height="9.6" fill="#9ad49a" stroke="#555" stroke-width="0.9"/><rect x="215" y="640" width="9.6" height="2" fill="#3050b0"/><path d="M216.5 648.5l7,-6" stroke="#fff" stroke-width="0.8"/><path d="M339.4 643.6l3 3l3 -3" fill="none" stroke="#555" stroke-width="0.8"/><path d="M558 643.6l3 3l3 -3" fill="none" stroke="#555" stroke-width="0.8"/><path d="M356.5 642.8v5l-2.8 -2.5z" fill="#555"/><path d="M365 642.5v5.6l3.2 -2.8z" fill="#111"/><path d="M575.5 642.8v5l-2.8 -2.5z" fill="#555"/><path d="M584 642.5v5.6l3.2 -2.8z" fill="#111"/><path d="M384 650l8 -8" stroke="#a8c4e8" stroke-width="1.2"/><circle cx="384.2" cy="649.8" r="1" fill="#e02020"/><circle cx="391.8" cy="642.2" r="1" fill="#e02020"/><path d="M390 648h3M391.5 648v3M390 651h3" stroke="#555" stroke-width="0.6"/><path d="M375.5 640v12" stroke="#d8d8d8" stroke-width="1"/><rect x="596.4" y="638" width="17.2" height="15.5" fill="#cce4f7" stroke="#99c9ef" stroke-width="0.8"/><rect x="613.6" y="638" width="19" height="15.5" fill="#cce4f7" stroke="#99c9ef" stroke-width="0.8"/><rect x="600" y="640.5" width="7" height="4.5" fill="#fff" stroke="#444" stroke-width="0.7"/><path d="M604 646q5 1 3 6" fill="none" stroke="#2a6ac0" stroke-width="1"/><rect x="619" y="640.5" width="7" height="4.5" fill="#fff" stroke="#444" stroke-width="0.7"/><path d="M621 646q-3 4 2 6" fill="none" stroke="#2a6ac0" stroke-width="1"/><path d="M635.5 640v12M733.5 640v12M756.5 640v12M836.5 640v12M858.5 640v12M937.5 640v12M961.5 640v12M982.5 640v12" stroke="#d8d8d8" stroke-width="1"/><rect x="641.5" y="640.5" width="12" height="12" fill="#d8d8d8" stroke="#888" stroke-width="0.8"/><rect x="644" y="643" width="7" height="7" fill="#bdbdbd"/><rect x="677.5" y="640.5" width="12" height="12" fill="#d8d8d8" stroke="#888" stroke-width="0.8"/><rect x="680" y="643" width="7" height="7" fill="#bdbdbd"/><rect x="696.5" y="640.5" width="12" height="12" fill="#d8d8d8" stroke="#888" stroke-width="0.8"/><rect x="699" y="643" width="7" height="7" fill="#bdbdbd"/><rect x="714.5" y="640.5" width="12" height="12" fill="#d8d8d8" stroke="#888" stroke-width="0.8"/><rect x="717" y="643" width="7" height="7" fill="#bdbdbd"/><rect x="641.5" y="640.5" width="12.5" height="12" fill="#e6e6e6" stroke="#555" stroke-width="0.9"/><path d="M642 644h12M642 648h12M645 641v11M648 641v11M651 641v11" stroke="#555" stroke-width="0.6"/><rect x="661" y="644" width="12" height="8" fill="none" stroke="#999" stroke-width="0.8"/><path d="M665 641h6l-1.5-1.5" fill="none" stroke="#999" stroke-width="0.7"/><rect x="738.5" y="640.5" width="12" height="12" fill="#d0d0d0" stroke="#555" stroke-width="0.9"/><path d="M740 642l9 9M749 642l-9 9" stroke="#444" stroke-width="1.6"/><path d="M761 642h7M761 646.5h7M761 651h7" stroke="#777" stroke-width="1.2"/><path d="M769 644l4 2.5l-4 2.5" fill="none" stroke="#555" stroke-width="1.1"/><path d="M781 642h7M781 646.5h7M781 651h7" stroke="#777" stroke-width="1.2"/><path d="M789 644l4 2.5l-4 2.5" fill="none" stroke="#555" stroke-width="1.1"/><path d="M797 642h7M797 646.5h7M797 651h7" stroke="#777" stroke-width="1.2"/><path d="M805 644l4 2.5l-4 2.5" fill="none" stroke="#555" stroke-width="1.1"/><path d="M816 642h7M816 646.5h7M816 651h7" stroke="#777" stroke-width="1.2"/><path d="M824 644l4 2.5l-4 2.5" fill="none" stroke="#555" stroke-width="1.1"/><rect x="840.5" y="640.5" width="12.5" height="12" fill="#fff" stroke="#555" stroke-width="0.9"/><rect x="841" y="641" width="11.5" height="4.5" fill="#b0b0e0"/><rect x="870" y="639.5" width="7" height="5" fill="#fff" stroke="#2a4aa0" stroke-width="0.8"/><text x="864" y="652" font-family="Liberation Sans" font-size="6" font-weight="bold" fill="#333">ab</text><path d="M872 648h5M872 650.5h5" stroke="#888" stroke-width="0.6"/><text x="884" y="651" font-family="Liberation Serif" font-style="italic" font-size="10" fill="#888">fx</text><text x="900" y="651" font-family="Liberation Serif" font-style="italic" font-size="10" fill="#888">fx</text><text x="920" y="651" font-family="Liberation Serif" font-style="italic" font-size="10" fill="#111">fx</text><path d="M905 640l5 4M910 640l-5 4" stroke="#777" stroke-width="0.9"/><circle cx="929" cy="641.5" r="2.2" fill="#2a4aa0"/><rect x="943.5" y="640.5" width="12" height="12" rx="1.5" fill="#e8f4e8" stroke="#2a8a2a" stroke-width="0.9"/><rect x="946" y="643" width="7" height="6" fill="#6c6"/><rect x="966.5" y="642" width="12.5" height="10" fill="#e0e0e0" stroke="#555" stroke-width="0.8"/><path d="M968 642q4 -4 9 -1" fill="#d8b080" stroke="#666" stroke-width="0.6"/><path d="M968 646h10M968 649h10" stroke="#777" stroke-width="0.6"/><rect x="987" y="640" width="13" height="2.5" fill="#6c6"/><text x="986.5" y="652" font-family="Liberation Sans" font-size="8" fill="#333">0.</text><text x="992.3" y="652" font-family="Liberation Sans" font-size="8" fill="#3050b0" text-decoration="underline">00</text><text x="1015" y="649" font-family="Liberation Sans" font-size="8.5" fill="#333">»</text><path d="M252.0 663.4v58.4" stroke="#dcdcdc" stroke-width="0.8"/><path d="M430.5 663.4v58.4" stroke="#dcdcdc" stroke-width="0.8"/><path d="M501.4 663.4v58.4" stroke="#dcdcdc" stroke-width="0.8"/><path d="M643.9 663.4v58.4" stroke="#dcdcdc" stroke-width="0.8"/><path d="M715.2 663.4v58.4" stroke="#dcdcdc" stroke-width="0.8"/><path d="M785.5 663.4v58.4" stroke="#dcdcdc" stroke-width="0.8"/><path d="M857.4 663.4v58.4" stroke="#dcdcdc" stroke-width="0.8"/><path d="M928.8 663.4v58.4" stroke="#dcdcdc" stroke-width="0.8"/><path d="M999.6 663.4v58.4" stroke="#dcdcdc" stroke-width="0.8"/><path d="M252.0 656v7.4" stroke="#f4f4f4" stroke-width="1.2"/><path d="M430.5 656v7.4" stroke="#f4f4f4" stroke-width="1.2"/><path d="M501.4 656v7.4" stroke="#f4f4f4" stroke-width="1.2"/><path d="M643.9 656v7.4" stroke="#f4f4f4" stroke-width="1.2"/><path d="M715.2 656v7.4" stroke="#f4f4f4" stroke-width="1.2"/><path d="M785.5 656v7.4" stroke="#f4f4f4" stroke-width="1.2"/><path d="M857.4 656v7.4" stroke="#f4f4f4" stroke-width="1.2"/><path d="M928.8 656v7.4" stroke="#f4f4f4" stroke-width="1.2"/><path d="M999.6 656v7.4" stroke="#f4f4f4" stroke-width="1.2"/><path d="M210 685.2h800" stroke="#e2e2e2" stroke-width="0.7"/><path d="M210 696.9h800" stroke="#e2e2e2" stroke-width="0.7"/><path d="M210 708.2h800" stroke="#e2e2e2" stroke-width="0.7"/><path d="M210 719h800" stroke="#e2e2e2" stroke-width="0.7"/><rect x="256" y="687.8" width="8.5" height="7" fill="#c8f4fa"/><rect x="256" y="699.5" width="8.5" height="7" fill="#f2c200"/><rect x="433.5" y="687.8" width="8.5" height="7" fill="#e8702a"/><rect x="433.5" y="699.5" width="8.5" height="7" fill="#f2c200"/><rect x="505" y="687.8" width="8.5" height="7" fill="#c8f4fa"/><rect x="505" y="699.5" width="8.5" height="7" fill="#c8f4fa"/><path d="M1013.5 662l2.5 -2.5l2.5 2.5M1013.5 714l2.5 2.5l2.5 -2.5" fill="none" stroke="#333" stroke-width="0.9"/><path d="M218 725.5l-2.8 2.6l2.8 2.6M1002.5 725.5l2.8 2.6l-2.8 2.6" fill="none" stroke="#333" stroke-width="1"/><path d="M213.3 737.5v6M218.5 737.7v5.6l-4.2-2.8z" stroke="#999" fill="#999" stroke-width="0.8"/><path d="M230 737.7v5.6l-4.2-2.8z" fill="#999"/><path d="M280 737.7v5.6l4.2-2.8z" fill="#222"/><path d="M291.3 737.7v5.6l4.2-2.8zM296.3 737.5v6" fill="#222" stroke="#222" stroke-width="0.8"/><path d="M1008.5 737.5v6l-3.5-3z" fill="#999"/><path d="M1015 737v7l4-3.5z" fill="#111"/><path d="M689.4 751v17" stroke="#dadada" stroke-width="1"/><path d="M801 751v17" stroke="#dadada" stroke-width="1"/><path d="M847 751v17" stroke="#dadada" stroke-width="1"/><path d="M900 751v17" stroke="#dadada" stroke-width="1"/><path d="M954.8 751v17" stroke="#dadada" stroke-width="1"/></svg>
</body></html>
